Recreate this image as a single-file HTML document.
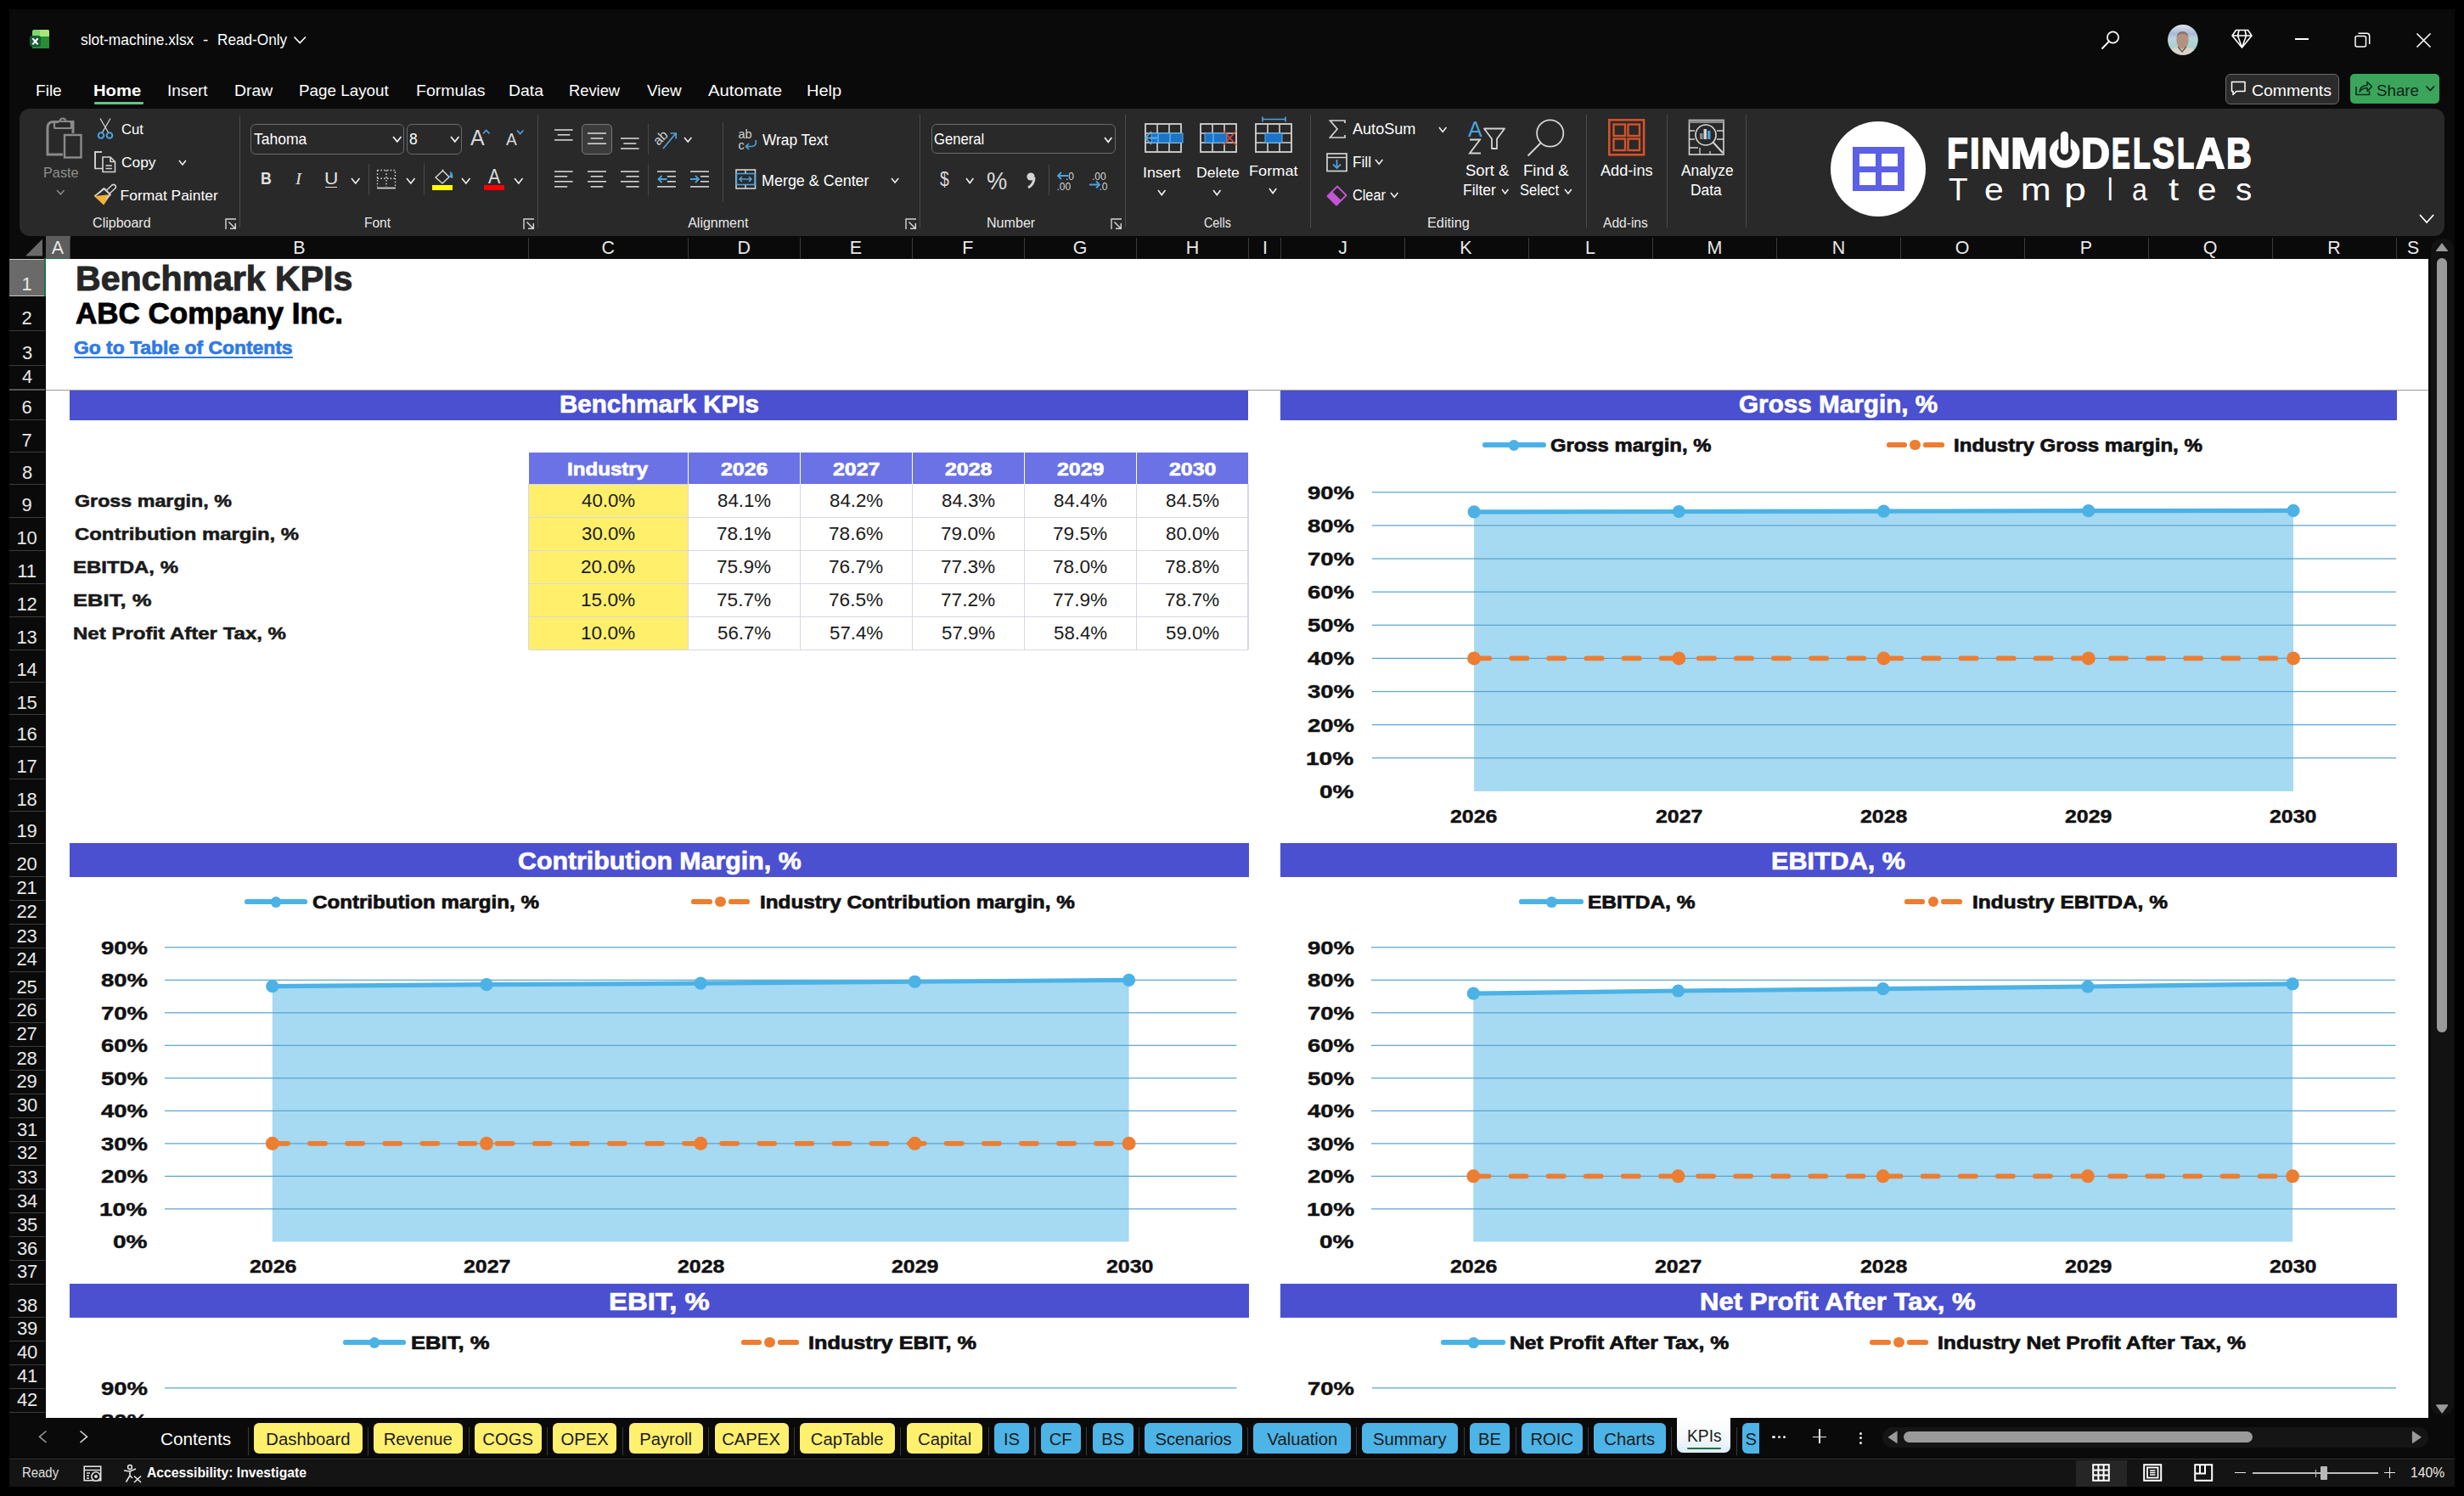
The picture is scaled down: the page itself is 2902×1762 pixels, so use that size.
<!DOCTYPE html><html><head><meta charset="utf-8"><style>*{margin:0;padding:0}html,body{width:2902px;height:1762px;overflow:hidden;background:#000}
.r,.t,.s{position:absolute}.t{white-space:nowrap;line-height:1;font-family:'Liberation Sans',sans-serif;transform-origin:left center}
svg{position:absolute;overflow:visible}</style></head><body><div style="position:relative;width:2902px;height:1762px;overflow:hidden"><div class="r" style="left:11.00px;top:11.00px;width:2880.00px;height:1740.00px;background:#0a0a0a;"></div>
<svg style="left:35px;top:34px;" width="24" height="25" viewBox="0 0 24 25">
<rect x="3" y="1" width="20" height="22" rx="2.5" fill="#1f7a3a"/>
<rect x="3" y="1" width="20" height="8" rx="2.5" fill="#7fd66a"/>
<rect x="3" y="5" width="20" height="4" fill="#7fd66a"/>
<rect x="12" y="1" width="11" height="8" rx="2" fill="#a8e67a"/>
<rect x="12" y="5" width="11" height="4" fill="#a8e67a"/>
<rect x="3" y="9" width="20" height="14" rx="0" fill="#258a3f"/>
<rect x="14" y="9" width="9" height="14" fill="#2a8c34"/>
<rect x="19" y="19" width="4" height="4" rx="2" fill="#2a8c34"/>
<rect x="0" y="8" width="13" height="13" rx="3" fill="#185c37"/>
<path d="M3.4 11.2 L9.6 18.4 M9.6 11.2 L3.4 18.4" stroke="#fff" stroke-width="2.1"/>
</svg>
<div class="t" style="left:95.20px;top:37.83px;font-size:18.857px;font-weight:normal;color:#ffffff;font-family:'Liberation Sans', sans-serif;transform:scaleX(0.9222);">slot-machine.xlsx</div>
<div class="t" style="left:239.00px;top:37.83px;font-size:18.857px;font-weight:normal;color:#ffffff;font-family:'Liberation Sans', sans-serif;">-</div>
<div class="t" style="left:255.79px;top:37.83px;font-size:18.857px;font-weight:normal;color:#ffffff;font-family:'Liberation Sans', sans-serif;transform:scaleX(0.9125);">Read-Only</div>
<svg style="left:345px;top:42px;" width="17" height="11" viewBox="0 0 17 11"><path d="M1.5 1.5 L8.2 8.5 L15 1.5" fill="none" stroke="#fff" stroke-width="1.6"/></svg>
<svg style="left:2474px;top:36px;" width="24" height="23" viewBox="0 0 24 23"><circle cx="14.5" cy="8" r="6.6" fill="none" stroke="#fff" stroke-width="1.7"/><path d="M10 12.6 L2 21" stroke="#fff" stroke-width="1.9" stroke-linecap="round"/></svg>
<svg style="left:2553px;top:29px;" width="36" height="36" viewBox="0 0 36 36"><defs><clipPath id="av"><circle cx="17.9" cy="17.9" r="17.9"/></clipPath>
<linearGradient id="avg" x1="0" y1="0" x2="0" y2="1"><stop offset="0" stop-color="#dfe4f0"/><stop offset="0.3" stop-color="#a9b9d6"/><stop offset="0.45" stop-color="#b9d4dc"/><stop offset="0.75" stop-color="#a9d2cf"/><stop offset="1" stop-color="#d8d4cc"/></linearGradient></defs>
<g clip-path="url(#av)"><rect width="36" height="36" fill="url(#avg)"/>
<ellipse cx="17.5" cy="18.5" rx="7.2" ry="10" fill="#b39282"/>
<path d="M10.5 15 Q11 8 17.5 8 Q24 8 24.5 15 Q22.5 10.5 17.5 10.5 Q12.5 10.5 10.5 15 Z" fill="#8a7268"/>
<path d="M2 36 Q4 27 11 26 L17 31 L23 26 Q31 27 34 36 Z" fill="#d9d2c8"/>
<path d="M12 26 L17 32 L22 26" fill="none" stroke="#6a5040" stroke-width="1.2"/></g></svg>
<svg style="left:2628px;top:34px;" width="26" height="24" viewBox="0 0 26 24"><path d="M5.5 1.5 H19.5 L24 8 L12.5 22 L1 8 Z M1 8 H24 M9 1.5 L7.5 8 L12.5 22 L17.5 8 L16 1.5" fill="none" stroke="#fff" stroke-width="1.6" stroke-linejoin="round"/></svg>
<div class="r" style="left:2703.00px;top:45.30px;width:15.60px;height:1.60px;background:#fff;"></div>
<svg style="left:2773px;top:37.6px;" width="19" height="19" viewBox="0 0 19 19"><rect x="1" y="4.5" width="12.5" height="12.5" rx="2" fill="none" stroke="#fff" stroke-width="1.5"/><path d="M4.5 1.3 H14.5 Q17.7 1.3 17.7 4.5 V14" fill="none" stroke="#fff" stroke-width="1.5"/></svg>
<svg style="left:2845px;top:37.6px;" width="19" height="19" viewBox="0 0 19 19"><path d="M1.5 1.5 L17.5 17.5 M17.5 1.5 L1.5 17.5" stroke="#fff" stroke-width="1.6"/></svg>
<div class="r" style="left:2621.00px;top:87.40px;width:134.20px;height:35.20px;box-sizing:border-box;border:1.3px solid #6a6a6a;background:#2b2b2b;border-radius:6px;"></div>
<svg style="left:2627px;top:95px;" width="20" height="20" viewBox="0 0 20 20"><path d="M1.5 1.5 H17 V12.5 H7 L3 16.5 V12.5 H1.5 Z" fill="none" stroke="#fff" stroke-width="1.5" stroke-linejoin="round"/></svg>
<div class="t" style="left:2652.30px;top:98.08px;font-size:18.571px;font-weight:normal;color:#fff;font-family:'Liberation Sans', sans-serif;transform:scaleX(1.0474);">Comments</div>
<div class="r" style="left:2768.00px;top:87.40px;width:104.70px;height:34.60px;background:#3ba55c;border-radius:5px;"></div>
<svg style="left:2773px;top:94px;" width="22" height="20" viewBox="0 0 22 20"><path d="M2 8 V17.5 H17.5 V13" fill="none" stroke="#10301a" stroke-width="1.6"/><path d="M6 14 Q7 6.5 15 6.5 V2.5 L20.5 8 L15 13.3 V9.5 Q9.5 9.5 6 14 Z" fill="none" stroke="#10301a" stroke-width="1.6" stroke-linejoin="round"/></svg>
<div class="t" style="left:2798.70px;top:98.08px;font-size:18.571px;font-weight:normal;color:#0f2416;font-family:'Liberation Sans', sans-serif;transform:scaleX(1.0100);">Share</div>
<svg style="left:2856px;top:100px;" width="13" height="9" viewBox="0 0 13 9"><path d="M1.5 1.5 L6.3 6.5 L11 1.5" fill="none" stroke="#0f2416" stroke-width="1.7"/></svg>
<div class="t" style="left:41.58px;top:97.56px;font-size:18.714px;font-weight:normal;color:#fff;font-family:'Liberation Sans', sans-serif;transform:scaleX(1.0197);">File</div>
<div class="t" style="left:110.22px;top:97.56px;font-size:18.714px;font-weight:bold;color:#fff;font-family:'Liberation Sans', sans-serif;transform:scaleX(1.0819);">Home</div>
<div class="t" style="left:197.28px;top:97.56px;font-size:18.714px;font-weight:normal;color:#fff;font-family:'Liberation Sans', sans-serif;transform:scaleX(1.0176);">Insert</div>
<div class="t" style="left:275.96px;top:97.56px;font-size:18.714px;font-weight:normal;color:#fff;font-family:'Liberation Sans', sans-serif;transform:scaleX(1.0362);">Draw</div>
<div class="t" style="left:351.99px;top:97.56px;font-size:18.714px;font-weight:normal;color:#fff;font-family:'Liberation Sans', sans-serif;transform:scaleX(1.0073);">Page Layout</div>
<div class="t" style="left:489.96px;top:97.56px;font-size:18.714px;font-weight:normal;color:#fff;font-family:'Liberation Sans', sans-serif;transform:scaleX(1.0445);">Formulas</div>
<div class="t" style="left:598.76px;top:97.56px;font-size:18.714px;font-weight:normal;color:#fff;font-family:'Liberation Sans', sans-serif;transform:scaleX(1.0382);">Data</div>
<div class="t" style="left:669.92px;top:97.56px;font-size:18.714px;font-weight:normal;color:#fff;font-family:'Liberation Sans', sans-serif;transform:scaleX(0.9800);">Review</div>
<div class="t" style="left:761.80px;top:97.56px;font-size:18.714px;font-weight:normal;color:#fff;font-family:'Liberation Sans', sans-serif;transform:scaleX(1.0075);">View</div>
<div class="t" style="left:834.00px;top:97.56px;font-size:18.714px;font-weight:normal;color:#fff;font-family:'Liberation Sans', sans-serif;transform:scaleX(1.0860);">Automate</div>
<div class="t" style="left:949.93px;top:97.56px;font-size:18.714px;font-weight:normal;color:#fff;font-family:'Liberation Sans', sans-serif;transform:scaleX(1.0711);">Help</div>
<div class="r" style="left:111.00px;top:120.00px;width:58.00px;height:2.60px;background:#68c08a;border-radius:1.3px;"></div>
<div class="r" style="left:23.00px;top:128.00px;width:2855.60px;height:149.70px;background:#292929;border-radius:12px;"></div>
<svg style="left:52px;top:140px;" width="46" height="48" viewBox="0 0 46 48">
<path d="M17 3.5 H11 Q4 3.5 4 10.5 V42 H22" fill="none" stroke="#8a8a8a" stroke-width="3"/>
<path d="M30 3.5 H34 V17" fill="none" stroke="#8a8a8a" stroke-width="3"/>
<rect x="12" y="3" width="20" height="8" rx="1.5" fill="none" stroke="#8a8a8a" stroke-width="2.2"/>
<path d="M18.5 3 Q18.5 -0.5 22 -0.5 Q25.5 -0.5 25.5 3" fill="none" stroke="#8a8a8a" stroke-width="2"/>
<rect x="24" y="19" width="19.5" height="26.5" fill="none" stroke="#8a8a8a" stroke-width="2.4"/>
</svg>
<div class="t" style="left:51.07px;top:194.95px;font-size:17.429px;font-weight:normal;color:#8f8f8f;font-family:'Liberation Sans', sans-serif;transform:scaleX(0.9339);">Paste</div>
<svg style="left:66px;top:223.4px;" width="10.700000000000003" height="6.799999999999983" viewBox="0 0 10.700000000000003 6.799999999999983"><path d="M1 1 L5.4 5.8 L9.7 1" fill="none" stroke="#8a8a8a" stroke-width="1.5"/></svg>
<svg style="left:114px;top:139px;" width="22" height="27" viewBox="0 0 22 27">
<path d="M4 0.5 L13.5 17 M16 0.5 L6.5 17" stroke="#d4d4d4" stroke-width="1.3" fill="none"/>
<circle cx="5" cy="20.5" r="3.3" fill="none" stroke="#4aa3df" stroke-width="2"/>
<circle cx="15" cy="20.5" r="3.3" fill="none" stroke="#4aa3df" stroke-width="2"/>
</svg>
<div class="t" style="left:142.60px;top:144.39px;font-size:17.143px;font-weight:normal;color:#ffffff;font-family:'Liberation Sans', sans-serif;transform:scaleX(0.9743);">Cut</div>
<svg style="left:111px;top:178px;" width="27" height="26" viewBox="0 0 27 26">
<path d="M8 2 V1 H1 V20.5 H10" fill="none" stroke="#d4d4d4" stroke-width="1.6"/>
<path d="M9 1 H1 V20.5" fill="none" stroke="#d4d4d4" stroke-width="1.6"/>
<path d="M10 7 H19 L24.5 12.5 V24.5 H10 Z M19 7 V12.5 H24.5" fill="none" stroke="#d4d4d4" stroke-width="1.6" stroke-linejoin="round"/>
<path d="M13.5 17 H21 M13.5 20.5 H21" stroke="#d4d4d4" stroke-width="1.4"/>
</svg>
<div class="t" style="left:142.60px;top:182.75px;font-size:17.429px;font-weight:normal;color:#ffffff;font-family:'Liberation Sans', sans-serif;transform:scaleX(0.9968);">Copy</div>
<svg style="left:210.4px;top:188px;" width="9.900000000000006" height="7" viewBox="0 0 9.900000000000006 7"><path d="M1 1 L5.0 6.0 L8.9 1" fill="none" stroke="#f0f0f0" stroke-width="1.6"/></svg>
<svg style="left:110px;top:217px;" width="28" height="26" viewBox="0 0 28 26">
<path d="M1.5 14 L13 5 L20 12 L12 24 Z" fill="#f2b13a" stroke="#f2b13a" stroke-width="1"/>
<path d="M1.5 14 L13 5 L20 12" fill="#2d2d2d" stroke="#d4d4d4" stroke-width="1.6" stroke-linejoin="round"/>
<path d="M7 10 L12 5 L20 12.5 L14.5 17.5" fill="none" stroke="#d4d4d4" stroke-width="1.5"/>
<path d="M14.5 8 L22 1 Q24 -0.5 25.8 1.3 Q27.3 3 25.5 5 L18 12" fill="none" stroke="#d4d4d4" stroke-width="1.6"/>
</svg>
<div class="t" style="left:141.60px;top:222.05px;font-size:17.429px;font-weight:normal;color:#ffffff;font-family:'Liberation Sans', sans-serif;">Format Painter</div>
<div class="t" style="left:109.10px;top:254.57px;font-size:16.000px;font-weight:normal;color:#e8e8e8;font-family:'Liberation Sans', sans-serif;">Clipboard</div>
<svg style="left:264.6px;top:256.5px;" width="14" height="14" viewBox="0 0 14 14"><path d="M1 13 V1 H13" fill="none" stroke="#d4d4d4" stroke-width="1.4"/><path d="M4.5 4.5 L12 12 M12.3 6 V12.3 H6" fill="none" stroke="#d4d4d4" stroke-width="1.5"/></svg>
<div class="r" style="left:282.10px;top:135.50px;width:1.20px;height:132.70px;background:#4a4a4a;"></div>
<div class="r" style="left:295.20px;top:146.00px;width:180.50px;height:35.80px;box-sizing:border-box;border:1.3px solid #6a6a6a;background:transparent;border-radius:6px;"></div>
<div class="t" style="left:298.60px;top:154.98px;font-size:18.571px;font-weight:normal;color:#ffffff;font-family:'Liberation Sans', sans-serif;transform:scaleX(0.9443);">Tahoma</div>
<svg style="left:461.5px;top:160.3px;" width="11.5" height="7.799999999999983" viewBox="0 0 11.5 7.799999999999983"><path d="M1 1 L5.8 6.8 L10.5 1" fill="none" stroke="#f0f0f0" stroke-width="1.7"/></svg>
<div class="r" style="left:479.30px;top:146.00px;width:64.30px;height:35.80px;box-sizing:border-box;border:1.3px solid #6a6a6a;background:transparent;border-radius:6px;"></div>
<div class="t" style="left:482.30px;top:154.98px;font-size:18.571px;font-weight:normal;color:#ffffff;font-family:'Liberation Sans', sans-serif;transform:scaleX(0.9400);">8</div>
<svg style="left:529.5px;top:160.3px;" width="11.5" height="7.799999999999983" viewBox="0 0 11.5 7.799999999999983"><path d="M1 1 L5.8 6.8 L10.5 1" fill="none" stroke="#f0f0f0" stroke-width="1.7"/></svg>
<div class="t" style="left:553.80px;top:148.98px;font-size:26.429px;font-weight:normal;color:#d8d8d8;font-family:'Liberation Sans', sans-serif;transform:scaleX(0.9444);">A</div>
<svg style="left:568px;top:152px;" width="10" height="7" viewBox="0 0 10 7"><path d="M1 5.5 L4.6 1.5 L8.5 5.5" fill="none" stroke="#4aa3df" stroke-width="1.7"/></svg>
<div class="t" style="left:595.50px;top:154.22px;font-size:20.286px;font-weight:normal;color:#d8d8d8;font-family:'Liberation Sans', sans-serif;transform:scaleX(0.9429);">A</div>
<svg style="left:607.5px;top:152px;" width="10" height="7" viewBox="0 0 10 7"><path d="M1 1.5 L4.6 5.5 L8.5 1.5" fill="none" stroke="#4aa3df" stroke-width="1.7"/></svg>
<div class="t" style="left:306.70px;top:200.80px;font-size:19.714px;font-weight:bold;color:#e0e0e0;font-family:'Liberation Sans', sans-serif;transform:scaleX(0.9000);">B</div>
<div class="t" style="left:348.07px;top:200.80px;font-size:19.714px;font-weight:normal;color:#e0e0e0;font-family:'Liberation Serif', serif;font-style:italic;transform:scaleX(1.0667);">I</div>
<div class="t" style="left:381.85px;top:200.80px;font-size:19.714px;font-weight:normal;color:#e0e0e0;font-family:'Liberation Sans', sans-serif;transform:scaleX(1.1500);">U</div>
<div class="r" style="left:383.00px;top:219.60px;width:13.80px;height:1.60px;background:#e0e0e0;"></div>
<svg style="left:413.3px;top:208.5px;" width="11.5" height="7.900000000000006" viewBox="0 0 11.5 7.900000000000006"><path d="M1 1 L5.8 6.9 L10.5 1" fill="none" stroke="#f0f0f0" stroke-width="1.6"/></svg>
<div class="r" style="left:433.80px;top:193.40px;width:1.20px;height:36.60px;background:#4a4a4a;"></div>
<svg style="left:443px;top:199px;" width="26" height="25" viewBox="0 0 26 25">
<path d="M1.5 1.5 H22.5 V21 M1.5 1.5 V21 M12 1.5 V21 M1.5 11.2 H22.5" fill="none" stroke="#d4d4d4" stroke-width="1.4" stroke-dasharray="1.6 2.2"/>
<path d="M1 22.5 H23" stroke="#d4d4d4" stroke-width="1.8"/>
</svg>
<svg style="left:478.3px;top:208.5px;" width="11.5" height="7.900000000000006" viewBox="0 0 11.5 7.900000000000006"><path d="M1 1 L5.8 6.9 L10.5 1" fill="none" stroke="#f0f0f0" stroke-width="1.6"/></svg>
<div class="r" style="left:498.80px;top:193.40px;width:1.20px;height:36.60px;background:#4a4a4a;"></div>
<svg style="left:510px;top:199px;" width="26" height="20" viewBox="0 0 26 20">
<path d="M3 10 L11.5 2 L19 9.5 L11 17 Z" fill="none" stroke="#d4d4d4" stroke-width="1.5" stroke-linejoin="round"/>
<path d="M11.5 2 V0.5" stroke="#d4d4d4" stroke-width="1.4"/>
<path d="M19 9.5 Q22 6.5 20.5 3.5 Q23.5 6 22.5 11" fill="#4aa3df" stroke="#4aa3df" stroke-width="1.2"/>
</svg>
<div class="r" style="left:508.60px;top:218.00px;width:24.40px;height:5.80px;background:#ffff00;"></div>
<svg style="left:543.3px;top:208.5px;" width="11.5" height="7.900000000000006" viewBox="0 0 11.5 7.900000000000006"><path d="M1 1 L5.8 6.9 L10.5 1" fill="none" stroke="#f0f0f0" stroke-width="1.6"/></svg>
<div class="t" style="left:575.00px;top:196.72px;font-size:23.571px;font-weight:normal;color:#d8d8d8;font-family:'Liberation Sans', sans-serif;transform:scaleX(0.9125);">A</div>
<div class="r" style="left:569.60px;top:218.00px;width:24.40px;height:5.80px;background:#ff0000;"></div>
<svg style="left:604.7px;top:208.5px;" width="11.5" height="7.900000000000006" viewBox="0 0 11.5 7.900000000000006"><path d="M1 1 L5.8 6.9 L10.5 1" fill="none" stroke="#f0f0f0" stroke-width="1.6"/></svg>
<div class="t" style="left:429.43px;top:254.57px;font-size:16.000px;font-weight:normal;color:#e8e8e8;font-family:'Liberation Sans', sans-serif;transform:scaleX(0.9693);">Font</div>
<svg style="left:616px;top:256.5px;" width="14" height="14" viewBox="0 0 14 14"><path d="M1 13 V1 H13" fill="none" stroke="#d4d4d4" stroke-width="1.4"/><path d="M4.5 4.5 L12 12 M12.3 6 V12.3 H6" fill="none" stroke="#d4d4d4" stroke-width="1.5"/></svg>
<div class="r" style="left:633.00px;top:135.00px;width:1.20px;height:133.00px;background:#4a4a4a;"></div>
<svg style="left:652.1px;top:150.9px;" width="40" height="15.900000000000006" viewBox="0 0 40 15.900000000000006"><path d="M1.0 2.0 H22.6" stroke="#d4d4d4" stroke-width="1.6"/><path d="M4.7 7.8 H19.3" stroke="#d4d4d4" stroke-width="1.6"/><path d="M1.0 13.9 H22.6" stroke="#d4d4d4" stroke-width="1.6"/></svg>
<div class="r" style="left:685.30px;top:146.30px;width:35.40px;height:35.30px;box-sizing:border-box;border:1.3px solid #7a7a7a;background:#3b3b3b;border-radius:5px;"></div>
<svg style="left:691px;top:154.9px;" width="40" height="16.19999999999999" viewBox="0 0 40 16.19999999999999"><path d="M1.0 2.0 H23.0" stroke="#d4d4d4" stroke-width="1.6"/><path d="M4.7 8.0 H19.3" stroke="#d4d4d4" stroke-width="1.6"/><path d="M1.0 14.2 H23.0" stroke="#d4d4d4" stroke-width="1.6"/></svg>
<svg style="left:730.3px;top:160.8px;" width="40" height="16.0" viewBox="0 0 40 16.0"><path d="M1.0 2.0 H22.6" stroke="#d4d4d4" stroke-width="1.6"/><path d="M4.3 8.0 H19.3" stroke="#d4d4d4" stroke-width="1.6"/><path d="M1.0 14.0 H22.6" stroke="#d4d4d4" stroke-width="1.6"/></svg>
<div class="r" style="left:763.10px;top:146.00px;width:1.20px;height:35.60px;background:#4a4a4a;"></div>
<svg style="left:772px;top:151px;" width="28" height="26" viewBox="0 0 28 26">
<text x="0" y="0" transform="translate(3.5 21) rotate(-45)" font-family="Liberation Sans" font-size="15.5" fill="#d4d4d4">ab</text>
<path d="M9 24 L24 6 M17.5 6 H24.2 V12.5" fill="none" stroke="#4aa3df" stroke-width="1.7"/>
</svg>
<svg style="left:805px;top:161px;" width="10.399999999999977" height="7" viewBox="0 0 10.399999999999977 7"><path d="M1 1 L5.2 6.0 L9.4 1" fill="none" stroke="#f0f0f0" stroke-width="1.6"/></svg>
<div class="r" style="left:851.00px;top:144.00px;width:1.20px;height:94.00px;background:#4a4a4a;"></div>
<svg style="left:869px;top:152px;" width="25" height="26" viewBox="0 0 25 26">
<text x="0.5" y="11" font-family="Liberation Sans" font-size="14.5" fill="#d4d4d4">ab</text>
<text x="0.5" y="23.5" font-family="Liberation Sans" font-size="14.5" fill="#d4d4d4">c</text>
<path d="M21 13 Q23 20 16 20.5 H10 M13 17 L9.5 20.5 L13 24" fill="none" stroke="#4aa3df" stroke-width="1.7"/>
</svg>
<div class="t" style="left:897.50px;top:155.62px;font-size:18.286px;font-weight:normal;color:#ffffff;font-family:'Liberation Sans', sans-serif;transform:scaleX(0.9474);">Wrap Text</div>
<svg style="left:652.1px;top:200.2px;" width="40" height="21.900000000000006" viewBox="0 0 40 21.900000000000006"><path d="M1.0 2.0 H22.6" stroke="#d4d4d4" stroke-width="1.6"/><path d="M1.0 7.8 H16.2" stroke="#d4d4d4" stroke-width="1.6"/><path d="M1.0 13.8 H22.6" stroke="#d4d4d4" stroke-width="1.6"/><path d="M1.0 19.9 H16.2" stroke="#d4d4d4" stroke-width="1.6"/></svg>
<svg style="left:691px;top:200.2px;" width="40" height="21.900000000000006" viewBox="0 0 40 21.900000000000006"><path d="M1.0 2.0 H23.0" stroke="#d4d4d4" stroke-width="1.6"/><path d="M4.7 7.8 H19.3" stroke="#d4d4d4" stroke-width="1.6"/><path d="M1.0 13.8 H23.0" stroke="#d4d4d4" stroke-width="1.6"/><path d="M4.7 19.9 H19.3" stroke="#d4d4d4" stroke-width="1.6"/></svg>
<svg style="left:730.3px;top:200.2px;" width="40" height="21.900000000000006" viewBox="0 0 40 21.900000000000006"><path d="M1.0 2.0 H22.6" stroke="#d4d4d4" stroke-width="1.6"/><path d="M7.4 7.8 H22.6" stroke="#d4d4d4" stroke-width="1.6"/><path d="M1.0 13.8 H22.6" stroke="#d4d4d4" stroke-width="1.6"/><path d="M7.4 19.9 H22.6" stroke="#d4d4d4" stroke-width="1.6"/></svg>
<div class="r" style="left:763.10px;top:194.30px;width:1.20px;height:35.70px;background:#4a4a4a;"></div>
<svg style="left:773.2px;top:200.2px;" width="40" height="21.900000000000006" viewBox="0 0 40 21.900000000000006"><path d="M1.0 2.0 H22.9" stroke="#d4d4d4" stroke-width="1.6"/><path d="M12.8 7.8 H22.9" stroke="#d4d4d4" stroke-width="1.6"/><path d="M12.8 13.8 H22.9" stroke="#d4d4d4" stroke-width="1.6"/><path d="M1.0 19.9 H22.9" stroke="#d4d4d4" stroke-width="1.6"/></svg>
<svg style="left:773px;top:205px;" width="14" height="12" viewBox="0 0 14 12"><path d="M12.5 6 H2.5 M6.5 2 L2.5 6 L6.5 10" fill="none" stroke="#4aa3df" stroke-width="1.8"/></svg>
<svg style="left:812px;top:200.2px;" width="40" height="21.900000000000006" viewBox="0 0 40 21.900000000000006"><path d="M1.0 2.0 H23.0" stroke="#d4d4d4" stroke-width="1.6"/><path d="M13.0 7.8 H23.0" stroke="#d4d4d4" stroke-width="1.6"/><path d="M13.0 13.8 H23.0" stroke="#d4d4d4" stroke-width="1.6"/><path d="M1.0 19.9 H23.0" stroke="#d4d4d4" stroke-width="1.6"/></svg>
<svg style="left:812px;top:205px;" width="14" height="12" viewBox="0 0 14 12"><path d="M1 6 H11 M7 2 L11 6 L7 10" fill="none" stroke="#4aa3df" stroke-width="1.8"/></svg>
<svg style="left:866px;top:199px;" width="25" height="25" viewBox="0 0 25 25">
<rect x="1" y="1" width="22.5" height="22" fill="none" stroke="#d4d4d4" stroke-width="1.6"/>
<rect x="1.5" y="5.5" width="21.5" height="13" fill="none" stroke="#4aa3df" stroke-width="1.6"/>
<path d="M12 1 V5 M12 19 V23" stroke="#d4d4d4" stroke-width="1.5"/>
<path d="M5 12 H19 M8 9 L5 12 L8 15 M16 9 L19 12 L16 15" fill="none" stroke="#4aa3df" stroke-width="1.6"/>
</svg>
<div class="t" style="left:896.52px;top:203.82px;font-size:18.286px;font-weight:normal;color:#ffffff;font-family:'Liberation Sans', sans-serif;transform:scaleX(0.9816);">Merge &amp; Center</div>
<svg style="left:1049px;top:209px;" width="10.200000000000045" height="7" viewBox="0 0 10.200000000000045 7"><path d="M1 1 L5.1 6.0 L9.2 1" fill="none" stroke="#f0f0f0" stroke-width="1.6"/></svg>
<div class="t" style="left:810.20px;top:254.57px;font-size:16.000px;font-weight:normal;color:#e8e8e8;font-family:'Liberation Sans', sans-serif;">Alignment</div>
<svg style="left:1065.5px;top:256.5px;" width="14" height="14" viewBox="0 0 14 14"><path d="M1 13 V1 H13" fill="none" stroke="#d4d4d4" stroke-width="1.4"/><path d="M4.5 4.5 L12 12 M12.3 6 V12.3 H6" fill="none" stroke="#d4d4d4" stroke-width="1.5"/></svg>
<div class="r" style="left:1082.90px;top:135.00px;width:1.20px;height:133.00px;background:#4a4a4a;"></div>
<div class="r" style="left:1096.60px;top:146.20px;width:217.10px;height:35.10px;box-sizing:border-box;border:1.3px solid #6a6a6a;background:transparent;border-radius:6px;"></div>
<div class="t" style="left:1099.60px;top:154.98px;font-size:18.571px;font-weight:normal;color:#ffffff;font-family:'Liberation Sans', sans-serif;transform:scaleX(0.8966);">General</div>
<svg style="left:1299.6px;top:160.7px;" width="10.400000000000091" height="7.400000000000006" viewBox="0 0 10.400000000000091 7.400000000000006"><path d="M1 1 L5.2 6.4 L9.4 1" fill="none" stroke="#f0f0f0" stroke-width="1.7"/></svg>
<div class="t" style="left:1107.40px;top:198.81px;font-size:24.286px;font-weight:normal;color:#d8d8d8;font-family:'Liberation Sans', sans-serif;transform:scaleX(0.8000);">$</div>
<svg style="left:1137.2px;top:208.7px;" width="10.399999999999864" height="7.600000000000023" viewBox="0 0 10.399999999999864 7.600000000000023"><path d="M1 1 L5.2 6.6 L9.4 1" fill="none" stroke="#f0f0f0" stroke-width="1.6"/></svg>
<div class="t" style="left:1162.47px;top:197.75px;font-size:29.286px;font-weight:normal;color:#d8d8d8;font-family:'Liberation Sans', sans-serif;transform:scaleX(0.9333);">%</div>
<svg style="left:1208px;top:202px;" width="14" height="22" viewBox="0 0 14 22"><circle cx="6" cy="6" r="4.6" fill="#d4d4d4"/><path d="M10 7 Q10 15 3 19" fill="none" stroke="#d4d4d4" stroke-width="3"/></svg>
<div class="r" style="left:1234.80px;top:193.80px;width:1.20px;height:36.40px;background:#4a4a4a;"></div>
<svg style="left:1243px;top:198px;" width="28" height="28" viewBox="0 0 28 28">
<path d="M15 9 H3 M7 5 L3 9 L7 13" fill="none" stroke="#4aa3df" stroke-width="1.8"/>
<text x="12" y="13.5" font-family="Liberation Sans" font-size="12" fill="#d4d4d4">.0</text>
<text x="1.5" y="25.5" font-family="Liberation Sans" font-size="12" fill="#d4d4d4">.00</text>
</svg>
<svg style="left:1281px;top:198px;" width="28" height="28" viewBox="0 0 28 28">
<text x="5" y="13.5" font-family="Liberation Sans" font-size="12" fill="#d4d4d4">.00</text>
<path d="M2 19.5 H14 M10 15.5 L14 19.5 L10 23.5" fill="none" stroke="#4aa3df" stroke-width="1.8"/>
<text x="13.5" y="25.5" font-family="Liberation Sans" font-size="12" fill="#d4d4d4">.0</text>
</svg>
<div class="t" style="left:1162.39px;top:254.57px;font-size:16.000px;font-weight:normal;color:#e8e8e8;font-family:'Liberation Sans', sans-serif;transform:scaleX(1.0057);">Number</div>
<svg style="left:1308px;top:256.5px;" width="14" height="14" viewBox="0 0 14 14"><path d="M1 13 V1 H13" fill="none" stroke="#d4d4d4" stroke-width="1.4"/><path d="M4.5 4.5 L12 12 M12.3 6 V12.3 H6" fill="none" stroke="#d4d4d4" stroke-width="1.5"/></svg>
<div class="r" style="left:1324.90px;top:135.00px;width:1.20px;height:133.00px;background:#4a4a4a;"></div>
<svg style="left:1347.5px;top:144.5px;" width="46" height="36" viewBox="0 0 46 36">
<rect x="1" y="1" width="42" height="33" fill="none" stroke="#d4d4d4" stroke-width="1.8"/>
<path d="M15 1 V34 M29 1 V34 M1 12 H43 M1 23 H43" stroke="#d4d4d4" stroke-width="1.6"/>
<rect x="8" y="12" width="37" height="11" fill="#1a74c8" stroke="#5ab0ea" stroke-width="1"/><path d="M16 12.5 V22.5 M30 12.5 V22.5" stroke="#5ab0ea" stroke-width="1.5"/><path d="M15 17.5 H1.5 M8 10 L1 17.5 L8 25" fill="none" stroke="#5ab0ea" stroke-width="1.8"/></svg>
<div class="t" style="left:1346.28px;top:194.85px;font-size:17.429px;font-weight:normal;color:#ffffff;font-family:'Liberation Sans', sans-serif;transform:scaleX(1.0235);">Insert</div>
<svg style="left:1363px;top:222.7px;" width="10.5" height="7.600000000000023" viewBox="0 0 10.5 7.600000000000023"><path d="M1 1 L5.2 6.6 L9.5 1" fill="none" stroke="#f0f0f0" stroke-width="1.6"/></svg>
<svg style="left:1412.5px;top:144.5px;" width="46" height="36" viewBox="0 0 46 36">
<rect x="1" y="1" width="42" height="33" fill="none" stroke="#d4d4d4" stroke-width="1.8"/>
<path d="M15 1 V34 M29 1 V34 M1 12 H43 M1 23 H43" stroke="#d4d4d4" stroke-width="1.6"/>
<rect x="6" y="12" width="26" height="11" fill="#1a74c8" stroke="#5ab0ea" stroke-width="1"/><path d="M16 12.5 V22.5" stroke="#5ab0ea" stroke-width="1.5"/><path d="M28 9 L43 26 M43 9 L28 26" stroke="#e0463c" stroke-width="1.8"/></svg>
<div class="t" style="left:1408.79px;top:194.85px;font-size:17.429px;font-weight:normal;color:#ffffff;font-family:'Liberation Sans', sans-serif;transform:scaleX(1.0116);">Delete</div>
<svg style="left:1427.8px;top:222.7px;" width="10.5" height="7.600000000000023" viewBox="0 0 10.5 7.600000000000023"><path d="M1 1 L5.2 6.6 L9.5 1" fill="none" stroke="#f0f0f0" stroke-width="1.6"/></svg>
<svg style="left:1478.2px;top:144.5px;" width="46" height="36" viewBox="0 0 46 36">
<rect x="1" y="1" width="42" height="33" fill="none" stroke="#d4d4d4" stroke-width="1.8"/>
<path d="M15 1 V34 M29 1 V34 M1 12 H43 M1 23 H43" stroke="#d4d4d4" stroke-width="1.6"/>
<rect x="12" y="12" width="20" height="11" fill="#1a74c8" stroke="#5ab0ea" stroke-width="1"/></svg>
<svg style="left:1485px;top:137px;" width="32" height="8" viewBox="0 0 32 8"><path d="M2 3.5 H29 M2 0.5 V6.5 M29 0.5 V6.5" stroke="#4aa3df" stroke-width="1.6"/></svg>
<div class="t" style="left:1471.26px;top:192.95px;font-size:17.429px;font-weight:normal;color:#ffffff;font-family:'Liberation Sans', sans-serif;transform:scaleX(1.0444);">Format</div>
<svg style="left:1493.7px;top:220.8px;" width="10.299999999999955" height="7.599999999999994" viewBox="0 0 10.299999999999955 7.599999999999994"><path d="M1 1 L5.1 6.6 L9.3 1" fill="none" stroke="#f0f0f0" stroke-width="1.6"/></svg>
<div class="t" style="left:1418.20px;top:254.57px;font-size:16.000px;font-weight:normal;color:#e8e8e8;font-family:'Liberation Sans', sans-serif;transform:scaleX(0.8942);">Cells</div>
<div class="r" style="left:1543.30px;top:135.00px;width:1.20px;height:133.00px;background:#4a4a4a;"></div>
<svg style="left:1565px;top:141px;" width="21" height="23" viewBox="0 0 21 23"><path d="M19 4 V1 H1.5 L10 11 L1.5 21 H19 V18" fill="none" stroke="#d4d4d4" stroke-width="1.7" stroke-linejoin="miter"/></svg>
<div class="t" style="left:1593.10px;top:143.93px;font-size:17.571px;font-weight:normal;color:#ffffff;font-family:'Liberation Sans', sans-serif;transform:scaleX(1.0292);">AutoSum</div>
<svg style="left:1693.9px;top:149px;" width="10.399999999999864" height="7.300000000000011" viewBox="0 0 10.399999999999864 7.300000000000011"><path d="M1 1 L5.2 6.3 L9.4 1" fill="none" stroke="#f0f0f0" stroke-width="1.6"/></svg>
<svg style="left:1562px;top:180px;" width="26" height="23" viewBox="0 0 26 23"><rect x="1" y="1" width="23" height="20.5" fill="none" stroke="#d4d4d4" stroke-width="1.7"/><path d="M1 5.5 H24" stroke="#d4d4d4" stroke-width="1.5"/><path d="M12.5 8 V18 M8 13.5 L12.5 18 L17 13.5" fill="none" stroke="#4aa3df" stroke-width="1.8"/></svg>
<div class="t" style="left:1592.52px;top:182.53px;font-size:17.571px;font-weight:normal;color:#ffffff;font-family:'Liberation Sans', sans-serif;transform:scaleX(0.9790);">Fill</div>
<svg style="left:1619px;top:187px;" width="10.400000000000091" height="7.300000000000011" viewBox="0 0 10.400000000000091 7.300000000000011"><path d="M1 1 L5.2 6.3 L9.4 1" fill="none" stroke="#f0f0f0" stroke-width="1.6"/></svg>
<svg style="left:1562px;top:218px;" width="25" height="24" viewBox="0 0 25 24"><path d="M1.5 13 L13 1.5 L23.5 12 L12 23.5 Z" fill="none" stroke="#c455d6" stroke-width="1.8" stroke-linejoin="round"/><path d="M1.5 13 L7 7.5 L17.5 18 L12 23.5 Z" fill="#c455d6"/></svg>
<div class="t" style="left:1593.00px;top:221.63px;font-size:17.571px;font-weight:normal;color:#ffffff;font-family:'Liberation Sans', sans-serif;transform:scaleX(0.9259);">Clear</div>
<svg style="left:1636.9px;top:226px;" width="10.399999999999864" height="7.300000000000011" viewBox="0 0 10.399999999999864 7.300000000000011"><path d="M1 1 L5.2 6.3 L9.4 1" fill="none" stroke="#f0f0f0" stroke-width="1.6"/></svg>
<svg style="left:1728px;top:141px;" width="46" height="42" viewBox="0 0 46 42">
<text x="1" y="19.5" font-family="Liberation Sans" font-size="25" fill="#4aa3df">A</text>
<path d="M3 23.5 H15 L3 39.5 H16" fill="none" stroke="#d4d4d4" stroke-width="1.9"/>
<path d="M20 10.5 H44 L35 22.5 V34 H29 V22.5 Z" fill="none" stroke="#d4d4d4" stroke-width="1.8" stroke-linejoin="round"/>
</svg>
<div class="t" style="left:1725.50px;top:193.03px;font-size:17.571px;font-weight:normal;color:#ffffff;font-family:'Liberation Sans', sans-serif;transform:scaleX(1.0532);">Sort &amp;</div>
<div class="t" style="left:1723.40px;top:216.33px;font-size:17.571px;font-weight:normal;color:#ffffff;font-family:'Liberation Sans', sans-serif;transform:scaleX(0.9953);">Filter</div>
<svg style="left:1767.7px;top:221.5px;" width="9.399999999999864" height="7.0" viewBox="0 0 9.399999999999864 7.0"><path d="M1 1 L4.7 6.0 L8.4 1" fill="none" stroke="#f0f0f0" stroke-width="1.6"/></svg>
<svg style="left:1797px;top:139px;" width="46" height="47" viewBox="0 0 46 47"><circle cx="28.7" cy="18" r="15.6" fill="none" stroke="#d4d4d4" stroke-width="1.8"/><path d="M17.5 29.5 L2.5 44.5" stroke="#d4d4d4" stroke-width="1.9"/></svg>
<div class="t" style="left:1793.94px;top:193.03px;font-size:17.571px;font-weight:normal;color:#ffffff;font-family:'Liberation Sans', sans-serif;transform:scaleX(1.0571);">Find &amp;</div>
<div class="t" style="left:1790.20px;top:216.33px;font-size:17.571px;font-weight:normal;color:#ffffff;font-family:'Liberation Sans', sans-serif;transform:scaleX(0.9421);">Select</div>
<svg style="left:1841.6px;top:221.5px;" width="9.800000000000182" height="7.0" viewBox="0 0 9.800000000000182 7.0"><path d="M1 1 L4.9 6.0 L8.8 1" fill="none" stroke="#f0f0f0" stroke-width="1.6"/></svg>
<div class="t" style="left:1681.18px;top:254.57px;font-size:16.000px;font-weight:normal;color:#e8e8e8;font-family:'Liberation Sans', sans-serif;transform:scaleX(1.0186);">Editing</div>
<div class="r" style="left:1868.00px;top:135.00px;width:1.20px;height:133.00px;background:#4a4a4a;"></div>
<svg style="left:1893px;top:139px;" width="46" height="46" viewBox="0 0 46 46">
<rect x="2.3" y="2.3" width="40.8" height="41" fill="none" stroke="#d4532a" stroke-width="2.6"/>
<rect x="7.5" y="7.5" width="13.5" height="13.5" fill="none" stroke="#d4532a" stroke-width="2.4"/>
<rect x="24.5" y="7.5" width="13.5" height="13.5" fill="none" stroke="#d4532a" stroke-width="2.4"/>
<rect x="7.5" y="24.5" width="13.5" height="13.5" fill="none" stroke="#d4532a" stroke-width="2.4"/>
<rect x="24.5" y="24.5" width="13.5" height="13.5" fill="none" stroke="#d4532a" stroke-width="2.4"/>
</svg>
<div class="t" style="left:1885.20px;top:193.03px;font-size:17.571px;font-weight:normal;color:#ffffff;font-family:'Liberation Sans', sans-serif;transform:scaleX(1.0340);">Add-ins</div>
<div class="t" style="left:1888.40px;top:254.57px;font-size:16.000px;font-weight:normal;color:#e8e8e8;font-family:'Liberation Sans', sans-serif;transform:scaleX(0.9733);">Add-ins</div>
<div class="r" style="left:1962.80px;top:135.00px;width:1.20px;height:133.00px;background:#4a4a4a;"></div>
<svg style="left:1988px;top:140px;" width="45" height="45" viewBox="0 0 45 45">
<rect x="1.5" y="1.5" width="40.5" height="40.5" fill="none" stroke="#d4d4d4" stroke-width="1.6"/>
<rect x="1.5" y="1.5" width="40.5" height="3.5" fill="#8a8a8a"/>
<path d="M1.5 14 H8 M1.5 24 H8 M1.5 34 H12 M34 14 H42 M34 24 H42 M14 34 V42 M26 38 V42" stroke="#d4d4d4" stroke-width="1.3"/>
<circle cx="21" cy="19" r="12" fill="#292929" stroke="#d4d4d4" stroke-width="1.7"/>
<path d="M29.5 27.5 L41 40" stroke="#d4d4d4" stroke-width="2"/>
<rect x="14" y="17" width="3.5" height="7" fill="#8a8a8a"/>
<rect x="18.5" y="12" width="3.5" height="12" fill="#d4d4d4"/>
<rect x="23" y="14" width="3.5" height="10" fill="#4aa3df"/>
</svg>
<div class="t" style="left:1980.20px;top:193.03px;font-size:17.571px;font-weight:normal;color:#ffffff;font-family:'Liberation Sans', sans-serif;transform:scaleX(0.9852);">Analyze</div>
<div class="t" style="left:1991.41px;top:216.33px;font-size:17.571px;font-weight:normal;color:#ffffff;font-family:'Liberation Sans', sans-serif;transform:scaleX(0.9882);">Data</div>
<div class="r" style="left:2056.30px;top:135.00px;width:1.20px;height:133.00px;background:#4a4a4a;"></div>
<div class="r" style="left:2156.40px;top:142.90px;width:111.80px;height:111.80px;background:#ffffff;border-radius:56px;"></div>
<div class="r" style="left:2182.00px;top:172.90px;width:61.00px;height:52.60px;background:#5b60e6;"></div>
<div class="r" style="left:2190.00px;top:181.00px;width:19.00px;height:14.80px;background:#ffffff;"></div>
<div class="r" style="left:2216.30px;top:181.00px;width:19.00px;height:14.80px;background:#ffffff;"></div>
<div class="r" style="left:2190.00px;top:203.00px;width:19.00px;height:14.80px;background:#ffffff;"></div>
<div class="r" style="left:2216.30px;top:203.00px;width:19.00px;height:14.80px;background:#ffffff;"></div>
<div class="t" style="left:2293.23px;top:155.89px;font-size:49.429px;font-weight:bold;color:#fff;font-family:'Liberation Sans', sans-serif;-webkit-text-stroke:1.8px #fff;transform:scaleX(0.8231);">F</div>
<div class="t" style="left:2319.55px;top:155.89px;font-size:49.429px;font-weight:bold;color:#fff;font-family:'Liberation Sans', sans-serif;-webkit-text-stroke:1.8px #fff;transform:scaleX(0.8500);">I</div>
<div class="t" style="left:2332.87px;top:155.89px;font-size:49.429px;font-weight:bold;color:#fff;font-family:'Liberation Sans', sans-serif;-webkit-text-stroke:1.8px #fff;transform:scaleX(0.9767);">N</div>
<div class="t" style="left:2368.40px;top:155.89px;font-size:49.429px;font-weight:bold;color:#fff;font-family:'Liberation Sans', sans-serif;-webkit-text-stroke:1.8px #fff;transform:scaleX(1.0657);">M</div>
<div class="t" style="left:2450.94px;top:155.89px;font-size:49.429px;font-weight:bold;color:#fff;font-family:'Liberation Sans', sans-serif;-webkit-text-stroke:1.8px #fff;transform:scaleX(0.9548);">D</div>
<div class="t" style="left:2486.82px;top:155.89px;font-size:49.429px;font-weight:bold;color:#fff;font-family:'Liberation Sans', sans-serif;-webkit-text-stroke:1.8px #fff;transform:scaleX(0.6586);">E</div>
<div class="t" style="left:2512.13px;top:155.89px;font-size:49.429px;font-weight:bold;color:#fff;font-family:'Liberation Sans', sans-serif;-webkit-text-stroke:1.8px #fff;transform:scaleX(0.6885);">L</div>
<div class="t" style="left:2534.81px;top:155.89px;font-size:49.429px;font-weight:bold;color:#fff;font-family:'Liberation Sans', sans-serif;-webkit-text-stroke:1.8px #fff;transform:scaleX(0.7903);">S</div>
<div class="t" style="left:2564.39px;top:155.89px;font-size:49.429px;font-weight:bold;color:#fff;font-family:'Liberation Sans', sans-serif;-webkit-text-stroke:1.8px #fff;transform:scaleX(0.6692);">L</div>
<div class="t" style="left:2586.44px;top:155.89px;font-size:49.429px;font-weight:bold;color:#fff;font-family:'Liberation Sans', sans-serif;-webkit-text-stroke:1.8px #fff;transform:scaleX(0.9588);">A</div>
<div class="t" style="left:2621.99px;top:155.89px;font-size:49.429px;font-weight:bold;color:#fff;font-family:'Liberation Sans', sans-serif;-webkit-text-stroke:1.8px #fff;transform:scaleX(0.8355);">B</div>
<svg style="left:2410px;top:150px;" width="44" height="52" viewBox="0 0 44 52"><circle cx="21.6" cy="30" r="13.4" fill="none" stroke="#fff" stroke-width="8.9"/>
<rect x="14.5" y="2" width="14.2" height="32" rx="7" fill="#292929"/>
<rect x="16.9" y="4.7" width="9.1" height="27.3" rx="4.55" fill="#fff"/></svg>
<div class="t" style="left:2295.20px;top:206.48px;font-size:36.286px;font-weight:normal;color:#fff;font-family:'Liberation Sans', sans-serif;transform:scaleX(1.0227);">T</div>
<div class="t" style="left:2336.57px;top:206.48px;font-size:36.286px;font-weight:normal;color:#fff;font-family:'Liberation Sans', sans-serif;transform:scaleX(1.1278);">e</div>
<div class="t" style="left:2379.84px;top:206.48px;font-size:36.286px;font-weight:normal;color:#fff;font-family:'Liberation Sans', sans-serif;transform:scaleX(1.1808);">m</div>
<div class="t" style="left:2431.12px;top:206.48px;font-size:36.286px;font-weight:normal;color:#fff;font-family:'Liberation Sans', sans-serif;transform:scaleX(1.2882);">p</div>
<div class="t" style="left:2482.20px;top:206.48px;font-size:36.286px;font-weight:normal;color:#fff;font-family:'Liberation Sans', sans-serif;transform:scaleX(0.8000);">l</div>
<div class="t" style="left:2511.11px;top:206.48px;font-size:36.286px;font-weight:normal;color:#fff;font-family:'Liberation Sans', sans-serif;transform:scaleX(0.8900);">a</div>
<div class="t" style="left:2553.90px;top:206.48px;font-size:36.286px;font-weight:normal;color:#fff;font-family:'Liberation Sans', sans-serif;transform:scaleX(1.2100);">t</div>
<div class="t" style="left:2588.48px;top:206.48px;font-size:36.286px;font-weight:normal;color:#fff;font-family:'Liberation Sans', sans-serif;transform:scaleX(1.1167);">e</div>
<div class="t" style="left:2633.24px;top:206.48px;font-size:36.286px;font-weight:normal;color:#fff;font-family:'Liberation Sans', sans-serif;transform:scaleX(1.0625);">s</div>
<svg style="left:2848.6px;top:251.5px;" width="18.200000000000273" height="11.0" viewBox="0 0 18.200000000000273 11.0"><path d="M1 1 L9.1 10.0 L17.2 1" fill="none" stroke="#ffffff" stroke-width="1.7"/></svg>
<div class="r" style="left:53.60px;top:278.00px;width:29.30px;height:27.00px;background:#5d5d5d;"></div>
<div class="r" style="left:53.60px;top:303.50px;width:29.30px;height:1.50px;background:#1e7145;"></div>
<div class="t" style="left:60.75px;top:281.74px;font-size:21.429px;font-weight:normal;color:#e8e8e8;font-family:'Liberation Sans', sans-serif;">A</div>
<div class="r" style="left:82.40px;top:280.00px;width:1.00px;height:25.00px;background:#3c3c3c;"></div>
<div class="t" style="left:345.15px;top:281.74px;font-size:21.429px;font-weight:normal;color:#e8e8e8;font-family:'Liberation Sans', sans-serif;">B</div>
<div class="r" style="left:621.90px;top:280.00px;width:1.00px;height:25.00px;background:#3c3c3c;"></div>
<div class="t" style="left:708.45px;top:281.74px;font-size:21.429px;font-weight:normal;color:#e8e8e8;font-family:'Liberation Sans', sans-serif;">C</div>
<div class="r" style="left:810.00px;top:280.00px;width:1.00px;height:25.00px;background:#3c3c3c;"></div>
<div class="t" style="left:868.55px;top:281.74px;font-size:21.429px;font-weight:normal;color:#e8e8e8;font-family:'Liberation Sans', sans-serif;">D</div>
<div class="r" style="left:942.10px;top:280.00px;width:1.00px;height:25.00px;background:#3c3c3c;"></div>
<div class="t" style="left:1000.85px;top:281.74px;font-size:21.429px;font-weight:normal;color:#e8e8e8;font-family:'Liberation Sans', sans-serif;">E</div>
<div class="r" style="left:1073.60px;top:280.00px;width:1.00px;height:25.00px;background:#3c3c3c;"></div>
<div class="t" style="left:1133.15px;top:281.74px;font-size:21.429px;font-weight:normal;color:#e8e8e8;font-family:'Liberation Sans', sans-serif;">F</div>
<div class="r" style="left:1205.70px;top:280.00px;width:1.00px;height:25.00px;background:#3c3c3c;"></div>
<div class="t" style="left:1263.75px;top:281.74px;font-size:21.429px;font-weight:normal;color:#e8e8e8;font-family:'Liberation Sans', sans-serif;">G</div>
<div class="r" style="left:1337.80px;top:280.00px;width:1.00px;height:25.00px;background:#3c3c3c;"></div>
<div class="t" style="left:1396.80px;top:281.74px;font-size:21.429px;font-weight:normal;color:#e8e8e8;font-family:'Liberation Sans', sans-serif;">H</div>
<div class="r" style="left:1469.80px;top:280.00px;width:1.00px;height:25.00px;background:#3c3c3c;"></div>
<div class="t" style="left:1486.90px;top:281.74px;font-size:21.429px;font-weight:normal;color:#e8e8e8;font-family:'Liberation Sans', sans-serif;">I</div>
<div class="r" style="left:1508.00px;top:280.00px;width:1.00px;height:25.00px;background:#3c3c3c;"></div>
<div class="t" style="left:1576.35px;top:281.74px;font-size:21.429px;font-weight:normal;color:#e8e8e8;font-family:'Liberation Sans', sans-serif;">J</div>
<div class="r" style="left:1653.70px;top:280.00px;width:1.00px;height:25.00px;background:#3c3c3c;"></div>
<div class="t" style="left:1719.25px;top:281.74px;font-size:21.429px;font-weight:normal;color:#e8e8e8;font-family:'Liberation Sans', sans-serif;">K</div>
<div class="r" style="left:1799.80px;top:280.00px;width:1.00px;height:25.00px;background:#3c3c3c;"></div>
<div class="t" style="left:1867.05px;top:281.74px;font-size:21.429px;font-weight:normal;color:#e8e8e8;font-family:'Liberation Sans', sans-serif;">L</div>
<div class="r" style="left:1946.30px;top:280.00px;width:1.00px;height:25.00px;background:#3c3c3c;"></div>
<div class="t" style="left:2010.55px;top:281.74px;font-size:21.429px;font-weight:normal;color:#e8e8e8;font-family:'Liberation Sans', sans-serif;">M</div>
<div class="r" style="left:2091.80px;top:280.00px;width:1.00px;height:25.00px;background:#3c3c3c;"></div>
<div class="t" style="left:2157.80px;top:281.74px;font-size:21.429px;font-weight:normal;color:#e8e8e8;font-family:'Liberation Sans', sans-serif;">N</div>
<div class="r" style="left:2237.80px;top:280.00px;width:1.00px;height:25.00px;background:#3c3c3c;"></div>
<div class="t" style="left:2302.80px;top:281.74px;font-size:21.429px;font-weight:normal;color:#e8e8e8;font-family:'Liberation Sans', sans-serif;">O</div>
<div class="r" style="left:2383.80px;top:280.00px;width:1.00px;height:25.00px;background:#3c3c3c;"></div>
<div class="t" style="left:2449.80px;top:281.74px;font-size:21.429px;font-weight:normal;color:#e8e8e8;font-family:'Liberation Sans', sans-serif;">P</div>
<div class="r" style="left:2529.80px;top:280.00px;width:1.00px;height:25.00px;background:#3c3c3c;"></div>
<div class="t" style="left:2594.80px;top:281.74px;font-size:21.429px;font-weight:normal;color:#e8e8e8;font-family:'Liberation Sans', sans-serif;">Q</div>
<div class="r" style="left:2675.80px;top:280.00px;width:1.00px;height:25.00px;background:#3c3c3c;"></div>
<div class="t" style="left:2741.30px;top:281.74px;font-size:21.429px;font-weight:normal;color:#e8e8e8;font-family:'Liberation Sans', sans-serif;">R</div>
<div class="r" style="left:2821.80px;top:280.00px;width:1.00px;height:25.00px;background:#3c3c3c;"></div>
<div class="t" style="left:2835.00px;top:281.74px;font-size:21.429px;font-weight:normal;color:#e8e8e8;font-family:'Liberation Sans', sans-serif;">S</div>
<div class="r" style="left:28.00px;top:280.00px;width:25.00px;height:25.00px;background:#0a0a0a;"></div>
<svg style="left:29px;top:281px;" width="22" height="22" viewBox="0 0 22 22"><path d="M21 0.5 V20.5 H1 Z" fill="#6a6a6a"/></svg>
<div class="r" style="left:11.20px;top:305.00px;width:41.40px;height:1365.00px;background:#0a0a0a;"></div>
<div class="r" style="left:11.20px;top:305.30px;width:41.40px;height:43.70px;background:#6a6a6a;"></div>
<div class="r" style="left:11.20px;top:305.30px;width:41.40px;height:1.20px;background:#c8c8c8;"></div>
<div class="r" style="left:11.20px;top:347.80px;width:41.40px;height:1.20px;background:#c8c8c8;"></div>
<div class="t" style="left:25.50px;top:324.06px;font-size:22.000px;font-weight:normal;color:#e8e8e8;font-family:'Liberation Sans', sans-serif;">1</div>
<div class="r" style="left:11.20px;top:388.50px;width:41.40px;height:1.00px;background:#3c3c3c;"></div>
<div class="t" style="left:25.50px;top:364.06px;font-size:22.000px;font-weight:normal;color:#e8e8e8;font-family:'Liberation Sans', sans-serif;">2</div>
<div class="r" style="left:11.20px;top:429.50px;width:41.40px;height:1.00px;background:#3c3c3c;"></div>
<div class="t" style="left:26.00px;top:405.06px;font-size:22.000px;font-weight:normal;color:#e8e8e8;font-family:'Liberation Sans', sans-serif;">3</div>
<div class="r" style="left:11.20px;top:457.80px;width:41.40px;height:1.00px;background:#3c3c3c;"></div>
<div class="t" style="left:26.00px;top:433.36px;font-size:22.000px;font-weight:normal;color:#e8e8e8;font-family:'Liberation Sans', sans-serif;">4</div>
<div class="r" style="left:11.20px;top:493.50px;width:41.40px;height:1.00px;background:#3c3c3c;"></div>
<div class="t" style="left:25.50px;top:469.06px;font-size:22.000px;font-weight:normal;color:#e8e8e8;font-family:'Liberation Sans', sans-serif;">6</div>
<div class="r" style="left:11.20px;top:532.10px;width:41.40px;height:1.00px;background:#3c3c3c;"></div>
<div class="t" style="left:25.50px;top:507.66px;font-size:22.000px;font-weight:normal;color:#e8e8e8;font-family:'Liberation Sans', sans-serif;">7</div>
<div class="r" style="left:11.20px;top:570.10px;width:41.40px;height:1.00px;background:#3c3c3c;"></div>
<div class="t" style="left:26.00px;top:545.66px;font-size:22.000px;font-weight:normal;color:#e8e8e8;font-family:'Liberation Sans', sans-serif;">8</div>
<div class="r" style="left:11.20px;top:608.90px;width:41.40px;height:1.00px;background:#3c3c3c;"></div>
<div class="t" style="left:25.50px;top:584.46px;font-size:22.000px;font-weight:normal;color:#e8e8e8;font-family:'Liberation Sans', sans-serif;">9</div>
<div class="r" style="left:11.20px;top:647.90px;width:41.40px;height:1.00px;background:#3c3c3c;"></div>
<div class="t" style="left:19.38px;top:623.46px;font-size:22.000px;font-weight:normal;color:#e8e8e8;font-family:'Liberation Sans', sans-serif;">10</div>
<div class="r" style="left:11.20px;top:686.60px;width:41.40px;height:1.00px;background:#3c3c3c;"></div>
<div class="t" style="left:20.20px;top:662.16px;font-size:22.000px;font-weight:normal;color:#e8e8e8;font-family:'Liberation Sans', sans-serif;">11</div>
<div class="r" style="left:11.20px;top:725.50px;width:41.40px;height:1.00px;background:#3c3c3c;"></div>
<div class="t" style="left:19.38px;top:701.06px;font-size:22.000px;font-weight:normal;color:#e8e8e8;font-family:'Liberation Sans', sans-serif;">12</div>
<div class="r" style="left:11.20px;top:764.60px;width:41.40px;height:1.00px;background:#3c3c3c;"></div>
<div class="t" style="left:19.38px;top:740.16px;font-size:22.000px;font-weight:normal;color:#e8e8e8;font-family:'Liberation Sans', sans-serif;">13</div>
<div class="r" style="left:11.20px;top:802.90px;width:41.40px;height:1.00px;background:#3c3c3c;"></div>
<div class="t" style="left:19.38px;top:778.46px;font-size:22.000px;font-weight:normal;color:#e8e8e8;font-family:'Liberation Sans', sans-serif;">14</div>
<div class="r" style="left:11.20px;top:841.00px;width:41.40px;height:1.00px;background:#3c3c3c;"></div>
<div class="t" style="left:19.38px;top:816.56px;font-size:22.000px;font-weight:normal;color:#e8e8e8;font-family:'Liberation Sans', sans-serif;">15</div>
<div class="r" style="left:11.20px;top:878.90px;width:41.40px;height:1.00px;background:#3c3c3c;"></div>
<div class="t" style="left:19.38px;top:854.46px;font-size:22.000px;font-weight:normal;color:#e8e8e8;font-family:'Liberation Sans', sans-serif;">16</div>
<div class="r" style="left:11.20px;top:916.90px;width:41.40px;height:1.00px;background:#3c3c3c;"></div>
<div class="t" style="left:19.38px;top:892.46px;font-size:22.000px;font-weight:normal;color:#e8e8e8;font-family:'Liberation Sans', sans-serif;">17</div>
<div class="r" style="left:11.20px;top:955.00px;width:41.40px;height:1.00px;background:#3c3c3c;"></div>
<div class="t" style="left:19.38px;top:930.56px;font-size:22.000px;font-weight:normal;color:#e8e8e8;font-family:'Liberation Sans', sans-serif;">18</div>
<div class="r" style="left:11.20px;top:992.80px;width:41.40px;height:1.00px;background:#3c3c3c;"></div>
<div class="t" style="left:19.38px;top:968.36px;font-size:22.000px;font-weight:normal;color:#e8e8e8;font-family:'Liberation Sans', sans-serif;">19</div>
<div class="r" style="left:11.20px;top:1031.90px;width:41.40px;height:1.00px;background:#3c3c3c;"></div>
<div class="t" style="left:19.38px;top:1007.46px;font-size:22.000px;font-weight:normal;color:#e8e8e8;font-family:'Liberation Sans', sans-serif;">20</div>
<div class="r" style="left:11.20px;top:1059.70px;width:41.40px;height:1.00px;background:#3c3c3c;"></div>
<div class="t" style="left:19.38px;top:1035.26px;font-size:22.000px;font-weight:normal;color:#e8e8e8;font-family:'Liberation Sans', sans-serif;">21</div>
<div class="r" style="left:11.20px;top:1087.90px;width:41.40px;height:1.00px;background:#3c3c3c;"></div>
<div class="t" style="left:19.38px;top:1063.46px;font-size:22.000px;font-weight:normal;color:#e8e8e8;font-family:'Liberation Sans', sans-serif;">22</div>
<div class="r" style="left:11.20px;top:1116.10px;width:41.40px;height:1.00px;background:#3c3c3c;"></div>
<div class="t" style="left:19.38px;top:1091.66px;font-size:22.000px;font-weight:normal;color:#e8e8e8;font-family:'Liberation Sans', sans-serif;">23</div>
<div class="r" style="left:11.20px;top:1143.90px;width:41.40px;height:1.00px;background:#3c3c3c;"></div>
<div class="t" style="left:19.38px;top:1119.46px;font-size:22.000px;font-weight:normal;color:#e8e8e8;font-family:'Liberation Sans', sans-serif;">24</div>
<div class="r" style="left:11.20px;top:1176.00px;width:41.40px;height:1.00px;background:#3c3c3c;"></div>
<div class="t" style="left:19.38px;top:1151.56px;font-size:22.000px;font-weight:normal;color:#e8e8e8;font-family:'Liberation Sans', sans-serif;">25</div>
<div class="r" style="left:11.20px;top:1203.80px;width:41.40px;height:1.00px;background:#3c3c3c;"></div>
<div class="t" style="left:19.38px;top:1179.36px;font-size:22.000px;font-weight:normal;color:#e8e8e8;font-family:'Liberation Sans', sans-serif;">26</div>
<div class="r" style="left:11.20px;top:1231.90px;width:41.40px;height:1.00px;background:#3c3c3c;"></div>
<div class="t" style="left:19.38px;top:1207.46px;font-size:22.000px;font-weight:normal;color:#e8e8e8;font-family:'Liberation Sans', sans-serif;">27</div>
<div class="r" style="left:11.20px;top:1260.10px;width:41.40px;height:1.00px;background:#3c3c3c;"></div>
<div class="t" style="left:19.38px;top:1235.66px;font-size:22.000px;font-weight:normal;color:#e8e8e8;font-family:'Liberation Sans', sans-serif;">28</div>
<div class="r" style="left:11.20px;top:1287.50px;width:41.40px;height:1.00px;background:#3c3c3c;"></div>
<div class="t" style="left:19.38px;top:1263.06px;font-size:22.000px;font-weight:normal;color:#e8e8e8;font-family:'Liberation Sans', sans-serif;">29</div>
<div class="r" style="left:11.20px;top:1315.50px;width:41.40px;height:1.00px;background:#3c3c3c;"></div>
<div class="t" style="left:19.88px;top:1291.06px;font-size:22.000px;font-weight:normal;color:#e8e8e8;font-family:'Liberation Sans', sans-serif;">30</div>
<div class="r" style="left:11.20px;top:1344.00px;width:41.40px;height:1.00px;background:#3c3c3c;"></div>
<div class="t" style="left:19.88px;top:1319.56px;font-size:22.000px;font-weight:normal;color:#e8e8e8;font-family:'Liberation Sans', sans-serif;">31</div>
<div class="r" style="left:11.20px;top:1371.90px;width:41.40px;height:1.00px;background:#3c3c3c;"></div>
<div class="t" style="left:19.88px;top:1347.46px;font-size:22.000px;font-weight:normal;color:#e8e8e8;font-family:'Liberation Sans', sans-serif;">32</div>
<div class="r" style="left:11.20px;top:1400.10px;width:41.40px;height:1.00px;background:#3c3c3c;"></div>
<div class="t" style="left:19.88px;top:1375.66px;font-size:22.000px;font-weight:normal;color:#e8e8e8;font-family:'Liberation Sans', sans-serif;">33</div>
<div class="r" style="left:11.20px;top:1428.30px;width:41.40px;height:1.00px;background:#3c3c3c;"></div>
<div class="t" style="left:19.88px;top:1403.86px;font-size:22.000px;font-weight:normal;color:#e8e8e8;font-family:'Liberation Sans', sans-serif;">34</div>
<div class="r" style="left:11.20px;top:1456.20px;width:41.40px;height:1.00px;background:#3c3c3c;"></div>
<div class="t" style="left:19.88px;top:1431.76px;font-size:22.000px;font-weight:normal;color:#e8e8e8;font-family:'Liberation Sans', sans-serif;">35</div>
<div class="r" style="left:11.20px;top:1484.20px;width:41.40px;height:1.00px;background:#3c3c3c;"></div>
<div class="t" style="left:19.88px;top:1459.76px;font-size:22.000px;font-weight:normal;color:#e8e8e8;font-family:'Liberation Sans', sans-serif;">36</div>
<div class="r" style="left:11.20px;top:1511.50px;width:41.40px;height:1.00px;background:#3c3c3c;"></div>
<div class="t" style="left:19.88px;top:1487.06px;font-size:22.000px;font-weight:normal;color:#e8e8e8;font-family:'Liberation Sans', sans-serif;">37</div>
<div class="r" style="left:11.20px;top:1551.00px;width:41.40px;height:1.00px;background:#3c3c3c;"></div>
<div class="t" style="left:19.88px;top:1526.56px;font-size:22.000px;font-weight:normal;color:#e8e8e8;font-family:'Liberation Sans', sans-serif;">38</div>
<div class="r" style="left:11.20px;top:1578.90px;width:41.40px;height:1.00px;background:#3c3c3c;"></div>
<div class="t" style="left:19.88px;top:1554.46px;font-size:22.000px;font-weight:normal;color:#e8e8e8;font-family:'Liberation Sans', sans-serif;">39</div>
<div class="r" style="left:11.20px;top:1606.80px;width:41.40px;height:1.00px;background:#3c3c3c;"></div>
<div class="t" style="left:19.88px;top:1582.36px;font-size:22.000px;font-weight:normal;color:#e8e8e8;font-family:'Liberation Sans', sans-serif;">40</div>
<div class="r" style="left:11.20px;top:1634.80px;width:41.40px;height:1.00px;background:#3c3c3c;"></div>
<div class="t" style="left:19.88px;top:1610.36px;font-size:22.000px;font-weight:normal;color:#e8e8e8;font-family:'Liberation Sans', sans-serif;">41</div>
<div class="r" style="left:11.20px;top:1662.70px;width:41.40px;height:1.00px;background:#3c3c3c;"></div>
<div class="t" style="left:19.88px;top:1638.26px;font-size:22.000px;font-weight:normal;color:#e8e8e8;font-family:'Liberation Sans', sans-serif;">42</div>
<div class="r" style="left:11.20px;top:1699.50px;width:41.40px;height:1.00px;background:#3c3c3c;"></div>
<div class="r" style="left:11.20px;top:458.30px;width:41.40px;height:2.10px;background:#555;"></div>
<div class="r" style="left:52.40px;top:304.00px;width:1.60px;height:45.00px;background:#1e7145;"></div>
<div class="r" style="left:53.60px;top:305.30px;width:2806.40px;height:1365.00px;background:#ffffff;"></div>
<div class="t" style="left:89.35px;top:307.82px;font-size:40.000px;font-weight:bold;color:#262626;font-family:'Liberation Sans', sans-serif;-webkit-text-stroke:1.0px #262626;transform:scaleX(1.0265);">Benchmark KPIs</div>
<div class="t" style="left:89.00px;top:352.30px;font-size:34.857px;font-weight:bold;color:#000000;font-family:'Liberation Sans', sans-serif;-webkit-text-stroke:0.9px #000000;transform:scaleX(1.0043);">ABC Company Inc.</div>
<div class="t" style="left:87.30px;top:398.96px;font-size:22.000px;font-weight:bold;color:#2f7ae5;font-family:'Liberation Sans', sans-serif;-webkit-text-stroke:0.7px #2f7ae5;transform:scaleX(1.0398);">Go to Table of Contents</div>
<div class="r" style="left:87.30px;top:420.20px;width:257.30px;height:1.80px;background:#2f7ae5;"></div>
<div class="r" style="left:53.60px;top:458.80px;width:2806.40px;height:1.20px;background:#9a9a9a;"></div>
<div class="r" style="left:82.20px;top:460.00px;width:1388.10px;height:34.60px;background:#4b50d0;"></div>
<div class="t" style="left:658.77px;top:462.24px;font-size:28.714px;font-weight:bold;color:#ffffff;font-family:'Liberation Sans', sans-serif;-webkit-text-stroke:0.7px #ffffff;transform:scaleX(1.0298);">Benchmark KPIs</div>
<div class="r" style="left:622.80px;top:533.10px;width:847.20px;height:36.80px;background:#6b72e6;"></div>
<div class="t" style="left:668.34px;top:540.73px;font-size:22.857px;font-weight:bold;color:#ffffff;font-family:'Liberation Sans', sans-serif;-webkit-text-stroke:0.7px #ffffff;transform:scaleX(1.0558);">Industry</div>
<div class="r" style="left:809.90px;top:533.10px;width:1.30px;height:36.80px;background:#ffffff;"></div>
<div class="t" style="left:849.00px;top:540.73px;font-size:22.857px;font-weight:bold;color:#ffffff;font-family:'Liberation Sans', sans-serif;-webkit-text-stroke:0.7px #ffffff;transform:scaleX(1.0915);">2026</div>
<div class="r" style="left:941.80px;top:533.10px;width:1.30px;height:36.80px;background:#ffffff;"></div>
<div class="t" style="left:980.90px;top:540.73px;font-size:22.857px;font-weight:bold;color:#ffffff;font-family:'Liberation Sans', sans-serif;-webkit-text-stroke:0.7px #ffffff;transform:scaleX(1.0915);">2027</div>
<div class="r" style="left:1073.70px;top:533.10px;width:1.30px;height:36.80px;background:#ffffff;"></div>
<div class="t" style="left:1112.85px;top:540.73px;font-size:22.857px;font-weight:bold;color:#ffffff;font-family:'Liberation Sans', sans-serif;-webkit-text-stroke:0.7px #ffffff;transform:scaleX(1.0915);">2028</div>
<div class="r" style="left:1205.70px;top:533.10px;width:1.30px;height:36.80px;background:#ffffff;"></div>
<div class="t" style="left:1244.85px;top:540.73px;font-size:22.857px;font-weight:bold;color:#ffffff;font-family:'Liberation Sans', sans-serif;-webkit-text-stroke:0.7px #ffffff;transform:scaleX(1.0915);">2029</div>
<div class="r" style="left:1337.70px;top:533.10px;width:1.30px;height:36.80px;background:#ffffff;"></div>
<div class="t" style="left:1376.75px;top:540.73px;font-size:22.857px;font-weight:bold;color:#ffffff;font-family:'Liberation Sans', sans-serif;-webkit-text-stroke:0.7px #ffffff;transform:scaleX(1.0915);">2030</div>
<div class="r" style="left:622.80px;top:570.20px;width:187.60px;height:195.10px;background:#ffef6b;"></div>
<div class="t" style="left:87.50px;top:580.13px;font-size:20.857px;font-weight:bold;color:#1a1a1a;font-family:'Liberation Sans', sans-serif;-webkit-text-stroke:0.55px #1a1a1a;transform:scaleX(1.1162);">Gross margin, %</div>
<div class="t" style="left:685.20px;top:579.10px;font-size:21.714px;font-weight:normal;color:#1a1a1a;font-family:'Liberation Sans', sans-serif;transform:scaleX(1.0255);">40.0%</div>
<div class="t" style="left:844.95px;top:579.10px;font-size:21.714px;font-weight:normal;color:#1a1a1a;font-family:'Liberation Sans', sans-serif;transform:scaleX(1.0255);">84.1%</div>
<div class="t" style="left:976.85px;top:579.10px;font-size:21.714px;font-weight:normal;color:#1a1a1a;font-family:'Liberation Sans', sans-serif;transform:scaleX(1.0255);">84.2%</div>
<div class="t" style="left:1108.80px;top:579.10px;font-size:21.714px;font-weight:normal;color:#1a1a1a;font-family:'Liberation Sans', sans-serif;transform:scaleX(1.0255);">84.3%</div>
<div class="t" style="left:1240.80px;top:579.10px;font-size:21.714px;font-weight:normal;color:#1a1a1a;font-family:'Liberation Sans', sans-serif;transform:scaleX(1.0255);">84.4%</div>
<div class="t" style="left:1372.70px;top:579.10px;font-size:21.714px;font-weight:normal;color:#1a1a1a;font-family:'Liberation Sans', sans-serif;transform:scaleX(1.0255);">84.5%</div>
<div class="r" style="left:622.80px;top:608.60px;width:847.20px;height:1.20px;background:#d6d6ea;"></div>
<div class="t" style="left:87.50px;top:619.33px;font-size:20.857px;font-weight:bold;color:#1a1a1a;font-family:'Liberation Sans', sans-serif;-webkit-text-stroke:0.55px #1a1a1a;transform:scaleX(1.1462);">Contribution margin, %</div>
<div class="t" style="left:685.20px;top:618.30px;font-size:21.714px;font-weight:normal;color:#1a1a1a;font-family:'Liberation Sans', sans-serif;transform:scaleX(1.0255);">30.0%</div>
<div class="t" style="left:843.91px;top:618.30px;font-size:21.714px;font-weight:normal;color:#1a1a1a;font-family:'Liberation Sans', sans-serif;transform:scaleX(1.0425);">78.1%</div>
<div class="t" style="left:975.81px;top:618.30px;font-size:21.714px;font-weight:normal;color:#1a1a1a;font-family:'Liberation Sans', sans-serif;transform:scaleX(1.0425);">78.6%</div>
<div class="t" style="left:1107.76px;top:618.30px;font-size:21.714px;font-weight:normal;color:#1a1a1a;font-family:'Liberation Sans', sans-serif;transform:scaleX(1.0425);">79.0%</div>
<div class="t" style="left:1239.76px;top:618.30px;font-size:21.714px;font-weight:normal;color:#1a1a1a;font-family:'Liberation Sans', sans-serif;transform:scaleX(1.0425);">79.5%</div>
<div class="t" style="left:1372.70px;top:618.30px;font-size:21.714px;font-weight:normal;color:#1a1a1a;font-family:'Liberation Sans', sans-serif;transform:scaleX(1.0255);">80.0%</div>
<div class="r" style="left:622.80px;top:647.80px;width:847.20px;height:1.20px;background:#d6d6ea;"></div>
<div class="t" style="left:86.35px;top:658.33px;font-size:20.857px;font-weight:bold;color:#1a1a1a;font-family:'Liberation Sans', sans-serif;-webkit-text-stroke:0.55px #1a1a1a;transform:scaleX(1.1510);">EBITDA, %</div>
<div class="t" style="left:684.16px;top:657.30px;font-size:21.714px;font-weight:normal;color:#1a1a1a;font-family:'Liberation Sans', sans-serif;transform:scaleX(1.0425);">20.0%</div>
<div class="t" style="left:843.91px;top:657.30px;font-size:21.714px;font-weight:normal;color:#1a1a1a;font-family:'Liberation Sans', sans-serif;transform:scaleX(1.0425);">75.9%</div>
<div class="t" style="left:975.81px;top:657.30px;font-size:21.714px;font-weight:normal;color:#1a1a1a;font-family:'Liberation Sans', sans-serif;transform:scaleX(1.0425);">76.7%</div>
<div class="t" style="left:1107.76px;top:657.30px;font-size:21.714px;font-weight:normal;color:#1a1a1a;font-family:'Liberation Sans', sans-serif;transform:scaleX(1.0425);">77.3%</div>
<div class="t" style="left:1239.76px;top:657.30px;font-size:21.714px;font-weight:normal;color:#1a1a1a;font-family:'Liberation Sans', sans-serif;transform:scaleX(1.0425);">78.0%</div>
<div class="t" style="left:1371.66px;top:657.30px;font-size:21.714px;font-weight:normal;color:#1a1a1a;font-family:'Liberation Sans', sans-serif;transform:scaleX(1.0425);">78.8%</div>
<div class="r" style="left:622.80px;top:686.80px;width:847.20px;height:1.20px;background:#d6d6ea;"></div>
<div class="t" style="left:86.27px;top:697.33px;font-size:20.857px;font-weight:bold;color:#1a1a1a;font-family:'Liberation Sans', sans-serif;-webkit-text-stroke:0.55px #1a1a1a;transform:scaleX(1.2271);">EBIT, %</div>
<div class="t" style="left:684.16px;top:696.30px;font-size:21.714px;font-weight:normal;color:#1a1a1a;font-family:'Liberation Sans', sans-serif;transform:scaleX(1.0425);">15.0%</div>
<div class="t" style="left:843.91px;top:696.30px;font-size:21.714px;font-weight:normal;color:#1a1a1a;font-family:'Liberation Sans', sans-serif;transform:scaleX(1.0425);">75.7%</div>
<div class="t" style="left:975.81px;top:696.30px;font-size:21.714px;font-weight:normal;color:#1a1a1a;font-family:'Liberation Sans', sans-serif;transform:scaleX(1.0425);">76.5%</div>
<div class="t" style="left:1107.76px;top:696.30px;font-size:21.714px;font-weight:normal;color:#1a1a1a;font-family:'Liberation Sans', sans-serif;transform:scaleX(1.0425);">77.2%</div>
<div class="t" style="left:1239.76px;top:696.30px;font-size:21.714px;font-weight:normal;color:#1a1a1a;font-family:'Liberation Sans', sans-serif;transform:scaleX(1.0425);">77.9%</div>
<div class="t" style="left:1371.66px;top:696.30px;font-size:21.714px;font-weight:normal;color:#1a1a1a;font-family:'Liberation Sans', sans-serif;transform:scaleX(1.0425);">78.7%</div>
<div class="r" style="left:622.80px;top:725.80px;width:847.20px;height:1.20px;background:#d6d6ea;"></div>
<div class="t" style="left:86.35px;top:736.23px;font-size:20.857px;font-weight:bold;color:#1a1a1a;font-family:'Liberation Sans', sans-serif;-webkit-text-stroke:0.55px #1a1a1a;transform:scaleX(1.1527);">Net Profit After Tax, %</div>
<div class="t" style="left:684.16px;top:735.20px;font-size:21.714px;font-weight:normal;color:#1a1a1a;font-family:'Liberation Sans', sans-serif;transform:scaleX(1.0425);">10.0%</div>
<div class="t" style="left:844.95px;top:735.20px;font-size:21.714px;font-weight:normal;color:#1a1a1a;font-family:'Liberation Sans', sans-serif;transform:scaleX(1.0255);">56.7%</div>
<div class="t" style="left:976.85px;top:735.20px;font-size:21.714px;font-weight:normal;color:#1a1a1a;font-family:'Liberation Sans', sans-serif;transform:scaleX(1.0255);">57.4%</div>
<div class="t" style="left:1108.80px;top:735.20px;font-size:21.714px;font-weight:normal;color:#1a1a1a;font-family:'Liberation Sans', sans-serif;transform:scaleX(1.0255);">57.9%</div>
<div class="t" style="left:1240.80px;top:735.20px;font-size:21.714px;font-weight:normal;color:#1a1a1a;font-family:'Liberation Sans', sans-serif;transform:scaleX(1.0255);">58.4%</div>
<div class="t" style="left:1372.70px;top:735.20px;font-size:21.714px;font-weight:normal;color:#1a1a1a;font-family:'Liberation Sans', sans-serif;transform:scaleX(1.0255);">59.0%</div>
<div class="r" style="left:622.80px;top:764.70px;width:847.20px;height:1.20px;background:#d6d6ea;"></div>
<div class="r" style="left:622.20px;top:570.20px;width:1.20px;height:195.10px;background:#d6d6ea;"></div>
<div class="r" style="left:809.80px;top:570.20px;width:1.20px;height:195.10px;background:#d6d6ea;"></div>
<div class="r" style="left:941.70px;top:570.20px;width:1.20px;height:195.10px;background:#d6d6ea;"></div>
<div class="r" style="left:1073.60px;top:570.20px;width:1.20px;height:195.10px;background:#d6d6ea;"></div>
<div class="r" style="left:1205.60px;top:570.20px;width:1.20px;height:195.10px;background:#d6d6ea;"></div>
<div class="r" style="left:1337.60px;top:570.20px;width:1.20px;height:195.10px;background:#d6d6ea;"></div>
<div class="r" style="left:1469.40px;top:570.20px;width:1.20px;height:195.10px;background:#d6d6ea;"></div>
<div class="r" style="left:622.80px;top:570.20px;width:187.60px;height:0.10px;background:#d6d6ea;"></div>
<div class="r" style="left:1507.80px;top:460.00px;width:1315.50px;height:34.60px;background:#4b50d0;"></div>
<div class="t" style="left:2048.22px;top:462.24px;font-size:28.714px;font-weight:bold;color:#ffffff;font-family:'Liberation Sans', sans-serif;-webkit-text-stroke:0.7px #ffffff;transform:scaleX(1.0339);">Gross Margin, %</div>
<div class="r" style="left:1745.50px;top:521.40px;width:75.00px;height:5.60px;background:#4bb2e6;border-radius:2.8px;"></div>
<div class="r" style="left:1776.60px;top:517.80px;width:12.80px;height:12.80px;background:#4bb2e6;border-radius:6.4px;"></div>
<div class="t" style="left:1826.00px;top:513.70px;font-size:21.714px;font-weight:bold;color:#111;font-family:'Liberation Sans', sans-serif;-webkit-text-stroke:0.7px #111;transform:scaleX(1.0977);">Gross margin, %</div>
<div class="r" style="left:2221.60px;top:521.40px;width:24.52px;height:5.60px;background:#ed7d31;border-radius:2.8px;"></div>
<div class="r" style="left:2265.18px;top:521.40px;width:24.52px;height:5.60px;background:#ed7d31;border-radius:2.8px;"></div>
<div class="r" style="left:2249.35px;top:517.90px;width:12.60px;height:12.60px;background:#ed7d31;border-radius:6.3px;"></div>
<div class="t" style="left:2301.29px;top:513.70px;font-size:21.714px;font-weight:bold;color:#111;font-family:'Liberation Sans', sans-serif;-webkit-text-stroke:0.7px #111;transform:scaleX(1.1088);">Industry Gross margin, %</div>
<svg style="left:1615.60px;top:494.60px;overflow:hidden" width="1226" height="497" viewBox="0 0 1226 497"><polygon points="120.10,436.88 120.10,107.88 361.33,107.49 602.56,107.10 843.79,106.71 1085.02,106.32 1085.02,436.88" fill="#a6d9f2"/><rect x="0" y="397.16" width="1206.10" height="1.2" fill="#58a2cc"/><rect x="0" y="358.04" width="1206.10" height="1.2" fill="#58a2cc"/><rect x="0" y="318.92" width="1206.10" height="1.2" fill="#58a2cc"/><rect x="0" y="279.80" width="1206.10" height="1.2" fill="#58a2cc"/><rect x="0" y="240.68" width="1206.10" height="1.2" fill="#58a2cc"/><rect x="0" y="201.56" width="1206.10" height="1.2" fill="#58a2cc"/><rect x="0" y="162.44" width="1206.10" height="1.2" fill="#58a2cc"/><rect x="0" y="123.32" width="1206.10" height="1.2" fill="#58a2cc"/><rect x="0" y="84.20" width="1206.10" height="1.2" fill="#58a2cc"/><polyline points="120.10,107.88 361.33,107.49 602.56,107.10 843.79,106.71 1085.02,106.32" fill="none" stroke="#4bb2e6" stroke-width="5.2" stroke-linejoin="round" stroke-linecap="round"/><circle cx="120.10" cy="107.88" r="7.6" fill="#4bb2e6"/><circle cx="361.33" cy="107.49" r="7.6" fill="#4bb2e6"/><circle cx="602.56" cy="107.10" r="7.6" fill="#4bb2e6"/><circle cx="843.79" cy="106.71" r="7.6" fill="#4bb2e6"/><circle cx="1085.02" cy="106.32" r="7.6" fill="#4bb2e6"/><path d="M120.10 280.40 H1085.02" stroke="#ed7d31" stroke-width="5.6" stroke-dasharray="18.3 25.8" stroke-linecap="round"/><circle cx="120.10" cy="280.40" r="8" fill="#ed7d31"/><circle cx="361.33" cy="280.40" r="8" fill="#ed7d31"/><circle cx="602.56" cy="280.40" r="8" fill="#ed7d31"/><circle cx="843.79" cy="280.40" r="8" fill="#ed7d31"/><circle cx="1085.02" cy="280.40" r="8" fill="#ed7d31"/></svg>
<div class="t" style="left:1553.90px;top:921.74px;font-size:22.000px;font-weight:bold;color:#111;font-family:'Liberation Sans', sans-serif;-webkit-text-stroke:0.45px #111;transform:scaleX(1.2742);">0%</div>
<div class="t" style="left:1538.22px;top:882.62px;font-size:22.000px;font-weight:bold;color:#111;font-family:'Liberation Sans', sans-serif;-webkit-text-stroke:0.45px #111;transform:scaleX(1.2762);">10%</div>
<div class="t" style="left:1539.50px;top:843.50px;font-size:22.000px;font-weight:bold;color:#111;font-family:'Liberation Sans', sans-serif;-webkit-text-stroke:0.45px #111;transform:scaleX(1.2468);">20%</div>
<div class="t" style="left:1539.50px;top:804.38px;font-size:22.000px;font-weight:bold;color:#111;font-family:'Liberation Sans', sans-serif;-webkit-text-stroke:0.45px #111;transform:scaleX(1.2468);">30%</div>
<div class="t" style="left:1539.50px;top:765.26px;font-size:22.000px;font-weight:bold;color:#111;font-family:'Liberation Sans', sans-serif;-webkit-text-stroke:0.45px #111;transform:scaleX(1.2468);">40%</div>
<div class="t" style="left:1539.50px;top:726.14px;font-size:22.000px;font-weight:bold;color:#111;font-family:'Liberation Sans', sans-serif;-webkit-text-stroke:0.45px #111;transform:scaleX(1.2468);">50%</div>
<div class="t" style="left:1539.50px;top:687.02px;font-size:22.000px;font-weight:bold;color:#111;font-family:'Liberation Sans', sans-serif;-webkit-text-stroke:0.45px #111;transform:scaleX(1.2468);">60%</div>
<div class="t" style="left:1539.50px;top:647.90px;font-size:22.000px;font-weight:bold;color:#111;font-family:'Liberation Sans', sans-serif;-webkit-text-stroke:0.45px #111;transform:scaleX(1.2468);">70%</div>
<div class="t" style="left:1539.50px;top:608.78px;font-size:22.000px;font-weight:bold;color:#111;font-family:'Liberation Sans', sans-serif;-webkit-text-stroke:0.45px #111;transform:scaleX(1.2468);">80%</div>
<div class="t" style="left:1539.50px;top:569.66px;font-size:22.000px;font-weight:bold;color:#111;font-family:'Liberation Sans', sans-serif;-webkit-text-stroke:0.45px #111;transform:scaleX(1.2468);">90%</div>
<div class="t" style="left:1708.30px;top:949.73px;font-size:22.714px;font-weight:bold;color:#111;font-family:'Liberation Sans', sans-serif;-webkit-text-stroke:0.45px #111;transform:scaleX(1.0987);">2026</div>
<div class="t" style="left:1949.53px;top:949.73px;font-size:22.714px;font-weight:bold;color:#111;font-family:'Liberation Sans', sans-serif;-webkit-text-stroke:0.45px #111;transform:scaleX(1.0987);">2027</div>
<div class="t" style="left:2190.76px;top:949.73px;font-size:22.714px;font-weight:bold;color:#111;font-family:'Liberation Sans', sans-serif;-webkit-text-stroke:0.45px #111;transform:scaleX(1.0987);">2028</div>
<div class="t" style="left:2431.99px;top:949.73px;font-size:22.714px;font-weight:bold;color:#111;font-family:'Liberation Sans', sans-serif;-webkit-text-stroke:0.45px #111;transform:scaleX(1.0987);">2029</div>
<div class="t" style="left:2673.22px;top:949.73px;font-size:22.714px;font-weight:bold;color:#111;font-family:'Liberation Sans', sans-serif;-webkit-text-stroke:0.45px #111;transform:scaleX(1.0987);">2030</div>
<div class="r" style="left:82.20px;top:993.00px;width:1389.10px;height:39.60px;background:#4b50d0;"></div>
<div class="t" style="left:609.69px;top:1000.24px;font-size:28.714px;font-weight:bold;color:#ffffff;font-family:'Liberation Sans', sans-serif;-webkit-text-stroke:0.7px #ffffff;transform:scaleX(1.0568);">Contribution Margin, %</div>
<div class="r" style="left:288.00px;top:1059.40px;width:74.00px;height:5.60px;background:#4bb2e6;border-radius:2.8px;"></div>
<div class="r" style="left:318.60px;top:1055.80px;width:12.80px;height:12.80px;background:#4bb2e6;border-radius:6.4px;"></div>
<div class="t" style="left:368.00px;top:1051.70px;font-size:21.714px;font-weight:bold;color:#111;font-family:'Liberation Sans', sans-serif;-webkit-text-stroke:0.7px #111;transform:scaleX(1.1122);">Contribution margin, %</div>
<div class="r" style="left:814.00px;top:1059.40px;width:24.84px;height:5.60px;background:#ed7d31;border-radius:2.8px;"></div>
<div class="r" style="left:858.16px;top:1059.40px;width:24.84px;height:5.60px;background:#ed7d31;border-radius:2.8px;"></div>
<div class="r" style="left:842.20px;top:1055.90px;width:12.60px;height:12.60px;background:#ed7d31;border-radius:6.3px;"></div>
<div class="t" style="left:894.58px;top:1051.70px;font-size:21.714px;font-weight:bold;color:#111;font-family:'Liberation Sans', sans-serif;-webkit-text-stroke:0.7px #111;transform:scaleX(1.1182);">Industry Contribution margin, %</div>
<svg style="left:194.40px;top:1032.60px;overflow:hidden" width="1282" height="489" viewBox="0 0 1282 489"><polygon points="126.80,429.39 126.80,128.63 379.00,126.70 631.20,125.16 883.40,123.24 1135.60,121.31 1135.60,429.39" fill="#a6d9f2"/><rect x="0" y="390.28" width="1262.40" height="1.2" fill="#58a2cc"/><rect x="0" y="351.77" width="1262.40" height="1.2" fill="#58a2cc"/><rect x="0" y="313.26" width="1262.40" height="1.2" fill="#58a2cc"/><rect x="0" y="274.75" width="1262.40" height="1.2" fill="#58a2cc"/><rect x="0" y="236.24" width="1262.40" height="1.2" fill="#58a2cc"/><rect x="0" y="197.73" width="1262.40" height="1.2" fill="#58a2cc"/><rect x="0" y="159.22" width="1262.40" height="1.2" fill="#58a2cc"/><rect x="0" y="120.71" width="1262.40" height="1.2" fill="#58a2cc"/><rect x="0" y="82.20" width="1262.40" height="1.2" fill="#58a2cc"/><polyline points="126.80,128.63 379.00,126.70 631.20,125.16 883.40,123.24 1135.60,121.31" fill="none" stroke="#4bb2e6" stroke-width="5.2" stroke-linejoin="round" stroke-linecap="round"/><circle cx="126.80" cy="128.63" r="7.6" fill="#4bb2e6"/><circle cx="379.00" cy="126.70" r="7.6" fill="#4bb2e6"/><circle cx="631.20" cy="125.16" r="7.6" fill="#4bb2e6"/><circle cx="883.40" cy="123.24" r="7.6" fill="#4bb2e6"/><circle cx="1135.60" cy="121.31" r="7.6" fill="#4bb2e6"/><path d="M126.80 313.86 H1135.60" stroke="#ed7d31" stroke-width="5.6" stroke-dasharray="18.3 25.8" stroke-linecap="round"/><circle cx="126.80" cy="313.86" r="8" fill="#ed7d31"/><circle cx="379.00" cy="313.86" r="8" fill="#ed7d31"/><circle cx="631.20" cy="313.86" r="8" fill="#ed7d31"/><circle cx="883.40" cy="313.86" r="8" fill="#ed7d31"/><circle cx="1135.60" cy="313.86" r="8" fill="#ed7d31"/></svg>
<div class="t" style="left:133.00px;top:1452.25px;font-size:22.000px;font-weight:bold;color:#111;font-family:'Liberation Sans', sans-serif;-webkit-text-stroke:0.45px #111;transform:scaleX(1.2742);">0%</div>
<div class="t" style="left:117.32px;top:1413.74px;font-size:22.000px;font-weight:bold;color:#111;font-family:'Liberation Sans', sans-serif;-webkit-text-stroke:0.45px #111;transform:scaleX(1.2762);">10%</div>
<div class="t" style="left:118.60px;top:1375.23px;font-size:22.000px;font-weight:bold;color:#111;font-family:'Liberation Sans', sans-serif;-webkit-text-stroke:0.45px #111;transform:scaleX(1.2468);">20%</div>
<div class="t" style="left:118.60px;top:1336.72px;font-size:22.000px;font-weight:bold;color:#111;font-family:'Liberation Sans', sans-serif;-webkit-text-stroke:0.45px #111;transform:scaleX(1.2468);">30%</div>
<div class="t" style="left:118.60px;top:1298.21px;font-size:22.000px;font-weight:bold;color:#111;font-family:'Liberation Sans', sans-serif;-webkit-text-stroke:0.45px #111;transform:scaleX(1.2468);">40%</div>
<div class="t" style="left:118.60px;top:1259.70px;font-size:22.000px;font-weight:bold;color:#111;font-family:'Liberation Sans', sans-serif;-webkit-text-stroke:0.45px #111;transform:scaleX(1.2468);">50%</div>
<div class="t" style="left:118.60px;top:1221.19px;font-size:22.000px;font-weight:bold;color:#111;font-family:'Liberation Sans', sans-serif;-webkit-text-stroke:0.45px #111;transform:scaleX(1.2468);">60%</div>
<div class="t" style="left:118.60px;top:1182.68px;font-size:22.000px;font-weight:bold;color:#111;font-family:'Liberation Sans', sans-serif;-webkit-text-stroke:0.45px #111;transform:scaleX(1.2468);">70%</div>
<div class="t" style="left:118.60px;top:1144.17px;font-size:22.000px;font-weight:bold;color:#111;font-family:'Liberation Sans', sans-serif;-webkit-text-stroke:0.45px #111;transform:scaleX(1.2468);">80%</div>
<div class="t" style="left:118.60px;top:1105.66px;font-size:22.000px;font-weight:bold;color:#111;font-family:'Liberation Sans', sans-serif;-webkit-text-stroke:0.45px #111;transform:scaleX(1.2468);">90%</div>
<div class="t" style="left:293.80px;top:1480.24px;font-size:22.714px;font-weight:bold;color:#111;font-family:'Liberation Sans', sans-serif;-webkit-text-stroke:0.45px #111;transform:scaleX(1.0987);">2026</div>
<div class="t" style="left:546.00px;top:1480.24px;font-size:22.714px;font-weight:bold;color:#111;font-family:'Liberation Sans', sans-serif;-webkit-text-stroke:0.45px #111;transform:scaleX(1.0987);">2027</div>
<div class="t" style="left:798.20px;top:1480.24px;font-size:22.714px;font-weight:bold;color:#111;font-family:'Liberation Sans', sans-serif;-webkit-text-stroke:0.45px #111;transform:scaleX(1.0987);">2028</div>
<div class="t" style="left:1050.40px;top:1480.24px;font-size:22.714px;font-weight:bold;color:#111;font-family:'Liberation Sans', sans-serif;-webkit-text-stroke:0.45px #111;transform:scaleX(1.0987);">2029</div>
<div class="t" style="left:1302.60px;top:1480.24px;font-size:22.714px;font-weight:bold;color:#111;font-family:'Liberation Sans', sans-serif;-webkit-text-stroke:0.45px #111;transform:scaleX(1.0987);">2030</div>
<div class="r" style="left:1507.80px;top:993.00px;width:1315.50px;height:39.60px;background:#4b50d0;"></div>
<div class="t" style="left:2086.34px;top:1000.24px;font-size:28.714px;font-weight:bold;color:#ffffff;font-family:'Liberation Sans', sans-serif;-webkit-text-stroke:0.7px #ffffff;transform:scaleX(1.0648);">EBITDA, %</div>
<div class="r" style="left:1789.40px;top:1059.40px;width:75.60px;height:5.60px;background:#4bb2e6;border-radius:2.8px;"></div>
<div class="r" style="left:1820.80px;top:1055.80px;width:12.80px;height:12.80px;background:#4bb2e6;border-radius:6.4px;"></div>
<div class="t" style="left:1869.57px;top:1051.70px;font-size:21.714px;font-weight:bold;color:#111;font-family:'Liberation Sans', sans-serif;-webkit-text-stroke:0.7px #111;transform:scaleX(1.1277);">EBITDA, %</div>
<div class="r" style="left:2242.80px;top:1059.40px;width:24.55px;height:5.60px;background:#ed7d31;border-radius:2.8px;"></div>
<div class="r" style="left:2286.45px;top:1059.40px;width:24.55px;height:5.60px;background:#ed7d31;border-radius:2.8px;"></div>
<div class="r" style="left:2270.60px;top:1055.90px;width:12.60px;height:12.60px;background:#ed7d31;border-radius:6.3px;"></div>
<div class="t" style="left:2322.87px;top:1051.70px;font-size:21.714px;font-weight:bold;color:#111;font-family:'Liberation Sans', sans-serif;-webkit-text-stroke:0.7px #111;transform:scaleX(1.1285);">Industry EBITDA, %</div>
<svg style="left:1615.30px;top:1032.60px;overflow:hidden" width="1226" height="489" viewBox="0 0 1226 489"><polygon points="120.30,429.39 120.30,137.10 361.50,134.02 602.70,131.71 843.90,129.01 1085.10,125.93 1085.10,429.39" fill="#a6d9f2"/><rect x="0" y="390.28" width="1206.20" height="1.2" fill="#58a2cc"/><rect x="0" y="351.77" width="1206.20" height="1.2" fill="#58a2cc"/><rect x="0" y="313.26" width="1206.20" height="1.2" fill="#58a2cc"/><rect x="0" y="274.75" width="1206.20" height="1.2" fill="#58a2cc"/><rect x="0" y="236.24" width="1206.20" height="1.2" fill="#58a2cc"/><rect x="0" y="197.73" width="1206.20" height="1.2" fill="#58a2cc"/><rect x="0" y="159.22" width="1206.20" height="1.2" fill="#58a2cc"/><rect x="0" y="120.71" width="1206.20" height="1.2" fill="#58a2cc"/><rect x="0" y="82.20" width="1206.20" height="1.2" fill="#58a2cc"/><polyline points="120.30,137.10 361.50,134.02 602.70,131.71 843.90,129.01 1085.10,125.93" fill="none" stroke="#4bb2e6" stroke-width="5.2" stroke-linejoin="round" stroke-linecap="round"/><circle cx="120.30" cy="137.10" r="7.6" fill="#4bb2e6"/><circle cx="361.50" cy="134.02" r="7.6" fill="#4bb2e6"/><circle cx="602.70" cy="131.71" r="7.6" fill="#4bb2e6"/><circle cx="843.90" cy="129.01" r="7.6" fill="#4bb2e6"/><circle cx="1085.10" cy="125.93" r="7.6" fill="#4bb2e6"/><path d="M120.30 352.37 H1085.10" stroke="#ed7d31" stroke-width="5.6" stroke-dasharray="18.3 25.8" stroke-linecap="round"/><circle cx="120.30" cy="352.37" r="8" fill="#ed7d31"/><circle cx="361.50" cy="352.37" r="8" fill="#ed7d31"/><circle cx="602.70" cy="352.37" r="8" fill="#ed7d31"/><circle cx="843.90" cy="352.37" r="8" fill="#ed7d31"/><circle cx="1085.10" cy="352.37" r="8" fill="#ed7d31"/></svg>
<div class="t" style="left:1554.20px;top:1452.25px;font-size:22.000px;font-weight:bold;color:#111;font-family:'Liberation Sans', sans-serif;-webkit-text-stroke:0.45px #111;transform:scaleX(1.2742);">0%</div>
<div class="t" style="left:1538.52px;top:1413.74px;font-size:22.000px;font-weight:bold;color:#111;font-family:'Liberation Sans', sans-serif;-webkit-text-stroke:0.45px #111;transform:scaleX(1.2762);">10%</div>
<div class="t" style="left:1539.80px;top:1375.23px;font-size:22.000px;font-weight:bold;color:#111;font-family:'Liberation Sans', sans-serif;-webkit-text-stroke:0.45px #111;transform:scaleX(1.2468);">20%</div>
<div class="t" style="left:1539.80px;top:1336.72px;font-size:22.000px;font-weight:bold;color:#111;font-family:'Liberation Sans', sans-serif;-webkit-text-stroke:0.45px #111;transform:scaleX(1.2468);">30%</div>
<div class="t" style="left:1539.80px;top:1298.21px;font-size:22.000px;font-weight:bold;color:#111;font-family:'Liberation Sans', sans-serif;-webkit-text-stroke:0.45px #111;transform:scaleX(1.2468);">40%</div>
<div class="t" style="left:1539.80px;top:1259.70px;font-size:22.000px;font-weight:bold;color:#111;font-family:'Liberation Sans', sans-serif;-webkit-text-stroke:0.45px #111;transform:scaleX(1.2468);">50%</div>
<div class="t" style="left:1539.80px;top:1221.19px;font-size:22.000px;font-weight:bold;color:#111;font-family:'Liberation Sans', sans-serif;-webkit-text-stroke:0.45px #111;transform:scaleX(1.2468);">60%</div>
<div class="t" style="left:1539.80px;top:1182.68px;font-size:22.000px;font-weight:bold;color:#111;font-family:'Liberation Sans', sans-serif;-webkit-text-stroke:0.45px #111;transform:scaleX(1.2468);">70%</div>
<div class="t" style="left:1539.80px;top:1144.17px;font-size:22.000px;font-weight:bold;color:#111;font-family:'Liberation Sans', sans-serif;-webkit-text-stroke:0.45px #111;transform:scaleX(1.2468);">80%</div>
<div class="t" style="left:1539.80px;top:1105.66px;font-size:22.000px;font-weight:bold;color:#111;font-family:'Liberation Sans', sans-serif;-webkit-text-stroke:0.45px #111;transform:scaleX(1.2468);">90%</div>
<div class="t" style="left:1708.20px;top:1480.24px;font-size:22.714px;font-weight:bold;color:#111;font-family:'Liberation Sans', sans-serif;-webkit-text-stroke:0.45px #111;transform:scaleX(1.0987);">2026</div>
<div class="t" style="left:1949.40px;top:1480.24px;font-size:22.714px;font-weight:bold;color:#111;font-family:'Liberation Sans', sans-serif;-webkit-text-stroke:0.45px #111;transform:scaleX(1.0987);">2027</div>
<div class="t" style="left:2190.60px;top:1480.24px;font-size:22.714px;font-weight:bold;color:#111;font-family:'Liberation Sans', sans-serif;-webkit-text-stroke:0.45px #111;transform:scaleX(1.0987);">2028</div>
<div class="t" style="left:2431.80px;top:1480.24px;font-size:22.714px;font-weight:bold;color:#111;font-family:'Liberation Sans', sans-serif;-webkit-text-stroke:0.45px #111;transform:scaleX(1.0987);">2029</div>
<div class="t" style="left:2673.00px;top:1480.24px;font-size:22.714px;font-weight:bold;color:#111;font-family:'Liberation Sans', sans-serif;-webkit-text-stroke:0.45px #111;transform:scaleX(1.0987);">2030</div>
<div class="r" style="left:82.20px;top:1512.00px;width:1389.10px;height:39.60px;background:#4b50d0;"></div>
<div class="t" style="left:717.16px;top:1519.24px;font-size:28.714px;font-weight:bold;color:#ffffff;font-family:'Liberation Sans', sans-serif;-webkit-text-stroke:0.7px #ffffff;transform:scaleX(1.1444);">EBIT, %</div>
<div class="r" style="left:403.70px;top:1578.40px;width:74.50px;height:5.60px;background:#4bb2e6;border-radius:2.8px;"></div>
<div class="r" style="left:434.55px;top:1574.80px;width:12.80px;height:12.80px;background:#4bb2e6;border-radius:6.4px;"></div>
<div class="t" style="left:483.52px;top:1570.70px;font-size:21.714px;font-weight:bold;color:#111;font-family:'Liberation Sans', sans-serif;-webkit-text-stroke:0.7px #111;transform:scaleX(1.1791);">EBIT, %</div>
<div class="r" style="left:872.60px;top:1578.40px;width:24.52px;height:5.60px;background:#ed7d31;border-radius:2.8px;"></div>
<div class="r" style="left:916.18px;top:1578.40px;width:24.52px;height:5.60px;background:#ed7d31;border-radius:2.8px;"></div>
<div class="r" style="left:900.35px;top:1574.90px;width:12.60px;height:12.60px;background:#ed7d31;border-radius:6.3px;"></div>
<div class="t" style="left:951.84px;top:1570.70px;font-size:21.714px;font-weight:bold;color:#111;font-family:'Liberation Sans', sans-serif;-webkit-text-stroke:0.7px #111;transform:scaleX(1.1640);">Industry EBIT, %</div>
<svg style="left:194.40px;top:1551.60px;overflow:hidden" width="1282" height="119" viewBox="0 0 1282 119"><polygon points="126.80,429.39 126.80,137.87 379.00,134.79 631.20,132.09 883.40,129.40 1135.60,126.32 1135.60,429.39" fill="#a6d9f2"/><rect x="0" y="390.28" width="1262.40" height="1.2" fill="#58a2cc"/><rect x="0" y="351.77" width="1262.40" height="1.2" fill="#58a2cc"/><rect x="0" y="313.26" width="1262.40" height="1.2" fill="#58a2cc"/><rect x="0" y="274.75" width="1262.40" height="1.2" fill="#58a2cc"/><rect x="0" y="236.24" width="1262.40" height="1.2" fill="#58a2cc"/><rect x="0" y="197.73" width="1262.40" height="1.2" fill="#58a2cc"/><rect x="0" y="159.22" width="1262.40" height="1.2" fill="#58a2cc"/><rect x="0" y="120.71" width="1262.40" height="1.2" fill="#58a2cc"/><rect x="0" y="82.20" width="1262.40" height="1.2" fill="#58a2cc"/><polyline points="126.80,137.87 379.00,134.79 631.20,132.09 883.40,129.40 1135.60,126.32" fill="none" stroke="#4bb2e6" stroke-width="5.2" stroke-linejoin="round" stroke-linecap="round"/><circle cx="126.80" cy="137.87" r="7.6" fill="#4bb2e6"/><circle cx="379.00" cy="134.79" r="7.6" fill="#4bb2e6"/><circle cx="631.20" cy="132.09" r="7.6" fill="#4bb2e6"/><circle cx="883.40" cy="129.40" r="7.6" fill="#4bb2e6"/><circle cx="1135.60" cy="126.32" r="7.6" fill="#4bb2e6"/><path d="M126.80 371.62 H1135.60" stroke="#ed7d31" stroke-width="5.6" stroke-dasharray="18.3 25.8" stroke-linecap="round"/><circle cx="126.80" cy="371.62" r="8" fill="#ed7d31"/><circle cx="379.00" cy="371.62" r="8" fill="#ed7d31"/><circle cx="631.20" cy="371.62" r="8" fill="#ed7d31"/><circle cx="883.40" cy="371.62" r="8" fill="#ed7d31"/><circle cx="1135.60" cy="371.62" r="8" fill="#ed7d31"/></svg>
<div class="t" style="left:118.60px;top:1663.17px;font-size:22.000px;font-weight:bold;color:#111;font-family:'Liberation Sans', sans-serif;-webkit-text-stroke:0.45px #111;transform:scaleX(1.2468);">80%</div>
<div class="t" style="left:118.60px;top:1624.66px;font-size:22.000px;font-weight:bold;color:#111;font-family:'Liberation Sans', sans-serif;-webkit-text-stroke:0.45px #111;transform:scaleX(1.2468);">90%</div>
<div class="t" style="left:293.80px;top:1999.24px;font-size:22.714px;font-weight:bold;color:#111;font-family:'Liberation Sans', sans-serif;-webkit-text-stroke:0.45px #111;transform:scaleX(1.0987);">2026</div>
<div class="t" style="left:546.00px;top:1999.24px;font-size:22.714px;font-weight:bold;color:#111;font-family:'Liberation Sans', sans-serif;-webkit-text-stroke:0.45px #111;transform:scaleX(1.0987);">2027</div>
<div class="t" style="left:798.20px;top:1999.24px;font-size:22.714px;font-weight:bold;color:#111;font-family:'Liberation Sans', sans-serif;-webkit-text-stroke:0.45px #111;transform:scaleX(1.0987);">2028</div>
<div class="t" style="left:1050.40px;top:1999.24px;font-size:22.714px;font-weight:bold;color:#111;font-family:'Liberation Sans', sans-serif;-webkit-text-stroke:0.45px #111;transform:scaleX(1.0987);">2029</div>
<div class="t" style="left:1302.60px;top:1999.24px;font-size:22.714px;font-weight:bold;color:#111;font-family:'Liberation Sans', sans-serif;-webkit-text-stroke:0.45px #111;transform:scaleX(1.0987);">2030</div>
<div class="r" style="left:1507.80px;top:1512.00px;width:1315.50px;height:39.60px;background:#4b50d0;"></div>
<div class="t" style="left:2002.42px;top:1519.24px;font-size:28.714px;font-weight:bold;color:#ffffff;font-family:'Liberation Sans', sans-serif;-webkit-text-stroke:0.7px #ffffff;transform:scaleX(1.0826);">Net Profit After Tax, %</div>
<div class="r" style="left:1697.20px;top:1578.40px;width:75.90px;height:5.60px;background:#4bb2e6;border-radius:2.8px;"></div>
<div class="r" style="left:1728.75px;top:1574.80px;width:12.80px;height:12.80px;background:#4bb2e6;border-radius:6.4px;"></div>
<div class="t" style="left:1778.06px;top:1570.70px;font-size:21.714px;font-weight:bold;color:#111;font-family:'Liberation Sans', sans-serif;-webkit-text-stroke:0.7px #111;transform:scaleX(1.1396);">Net Profit After Tax, %</div>
<div class="r" style="left:2202.20px;top:1578.40px;width:24.73px;height:5.60px;background:#ed7d31;border-radius:2.8px;"></div>
<div class="r" style="left:2246.17px;top:1578.40px;width:24.73px;height:5.60px;background:#ed7d31;border-radius:2.8px;"></div>
<div class="r" style="left:2230.25px;top:1574.90px;width:12.60px;height:12.60px;background:#ed7d31;border-radius:6.3px;"></div>
<div class="t" style="left:2281.86px;top:1570.70px;font-size:21.714px;font-weight:bold;color:#111;font-family:'Liberation Sans', sans-serif;-webkit-text-stroke:0.7px #111;transform:scaleX(1.1401);">Industry Net Profit After Tax, %</div>
<svg style="left:1615.50px;top:1551.60px;overflow:hidden" width="1226" height="119" viewBox="0 0 1226 119"><polygon points="120.10,429.37 120.10,148.65 361.30,145.18 602.50,142.71 843.70,140.23 1084.90,137.26 1084.90,429.37" fill="#a6d9f2"/><rect x="0" y="379.26" width="1206.00" height="1.2" fill="#58a2cc"/><rect x="0" y="329.75" width="1206.00" height="1.2" fill="#58a2cc"/><rect x="0" y="280.24" width="1206.00" height="1.2" fill="#58a2cc"/><rect x="0" y="230.73" width="1206.00" height="1.2" fill="#58a2cc"/><rect x="0" y="181.22" width="1206.00" height="1.2" fill="#58a2cc"/><rect x="0" y="131.71" width="1206.00" height="1.2" fill="#58a2cc"/><rect x="0" y="82.20" width="1206.00" height="1.2" fill="#58a2cc"/><polyline points="120.10,148.65 361.30,145.18 602.50,142.71 843.70,140.23 1084.90,137.26" fill="none" stroke="#4bb2e6" stroke-width="5.2" stroke-linejoin="round" stroke-linecap="round"/><circle cx="120.10" cy="148.65" r="7.6" fill="#4bb2e6"/><circle cx="361.30" cy="145.18" r="7.6" fill="#4bb2e6"/><circle cx="602.50" cy="142.71" r="7.6" fill="#4bb2e6"/><circle cx="843.70" cy="140.23" r="7.6" fill="#4bb2e6"/><circle cx="1084.90" cy="137.26" r="7.6" fill="#4bb2e6"/><path d="M120.10 379.86 H1084.90" stroke="#ed7d31" stroke-width="5.6" stroke-dasharray="18.3 25.8" stroke-linecap="round"/><circle cx="120.10" cy="379.86" r="8" fill="#ed7d31"/><circle cx="361.30" cy="379.86" r="8" fill="#ed7d31"/><circle cx="602.50" cy="379.86" r="8" fill="#ed7d31"/><circle cx="843.70" cy="379.86" r="8" fill="#ed7d31"/><circle cx="1084.90" cy="379.86" r="8" fill="#ed7d31"/></svg>
<div class="t" style="left:1539.50px;top:1624.66px;font-size:22.000px;font-weight:bold;color:#111;font-family:'Liberation Sans', sans-serif;-webkit-text-stroke:0.45px #111;transform:scaleX(1.2468);">70%</div>
<div class="t" style="left:1708.20px;top:1999.22px;font-size:22.714px;font-weight:bold;color:#111;font-family:'Liberation Sans', sans-serif;-webkit-text-stroke:0.45px #111;transform:scaleX(1.0987);">2026</div>
<div class="t" style="left:1949.40px;top:1999.22px;font-size:22.714px;font-weight:bold;color:#111;font-family:'Liberation Sans', sans-serif;-webkit-text-stroke:0.45px #111;transform:scaleX(1.0987);">2027</div>
<div class="t" style="left:2190.60px;top:1999.22px;font-size:22.714px;font-weight:bold;color:#111;font-family:'Liberation Sans', sans-serif;-webkit-text-stroke:0.45px #111;transform:scaleX(1.0987);">2028</div>
<div class="t" style="left:2431.80px;top:1999.22px;font-size:22.714px;font-weight:bold;color:#111;font-family:'Liberation Sans', sans-serif;-webkit-text-stroke:0.45px #111;transform:scaleX(1.0987);">2029</div>
<div class="t" style="left:2673.00px;top:1999.22px;font-size:22.714px;font-weight:bold;color:#111;font-family:'Liberation Sans', sans-serif;-webkit-text-stroke:0.45px #111;transform:scaleX(1.0987);">2030</div>
<div class="r" style="left:2860.00px;top:278.00px;width:31.00px;height:1392.30px;background:#0a0a0a;"></div>
<div class="r" style="left:2862.50px;top:281.00px;width:27.00px;height:1386.00px;background:#121212;border-radius:13px;"></div>
<svg style="left:2868.5px;top:286px;" width="15" height="11" viewBox="0 0 15 11"><path d="M7 1 L13.5 9.5 H0.5 Z" fill="#9a9a9a" stroke="#9a9a9a" stroke-width="1.2" stroke-linejoin="round"/></svg>
<div class="r" style="left:2870.40px;top:304.00px;width:11.80px;height:912.00px;background:#9a9a9a;border-radius:5.9px;"></div>
<svg style="left:2868.5px;top:1653.5px;" width="15" height="11" viewBox="0 0 15 11"><path d="M0.8 1 H13.6 L7.2 9.8 Z" fill="#9a9a9a" stroke="#9a9a9a" stroke-width="1.4" stroke-linejoin="round"/></svg>
<div class="r" style="left:11.20px;top:1670.30px;width:2880.00px;height:48.00px;background:#0a0a0a;"></div>
<svg style="left:44px;top:1684px;" width="13" height="17" viewBox="0 0 13 17"><path d="M10.5 1.5 L2.5 8.2 L10.5 15" fill="none" stroke="#9a9a9a" stroke-width="1.6"/></svg>
<svg style="left:92px;top:1684px;" width="13" height="17" viewBox="0 0 13 17"><path d="M2.5 1.5 L10.5 8.2 L2.5 15" fill="none" stroke="#d8d8d8" stroke-width="1.6"/></svg>
<div class="t" style="left:189.28px;top:1685.32px;font-size:20.286px;font-weight:normal;color:#ffffff;font-family:'Liberation Sans', sans-serif;transform:scaleX(1.0240);">Contents</div>
<div class="r" style="left:298.90px;top:1676.20px;width:127.80px;height:35.80px;background:#fff06e;border-radius:6px;"></div>
<div class="t" style="left:313.36px;top:1685.32px;font-size:20.286px;font-weight:normal;color:#1c1c1c;font-family:'Liberation Sans', sans-serif;">Dashboard</div>
<div class="r" style="left:439.80px;top:1676.20px;width:105.70px;height:35.80px;background:#fff06e;border-radius:6px;"></div>
<div class="t" style="left:451.72px;top:1685.32px;font-size:20.286px;font-weight:normal;color:#1c1c1c;font-family:'Liberation Sans', sans-serif;">Revenue</div>
<div class="r" style="left:559.00px;top:1676.20px;width:78.80px;height:35.80px;background:#fff06e;border-radius:6px;"></div>
<div class="t" style="left:568.32px;top:1685.32px;font-size:20.286px;font-weight:normal;color:#1c1c1c;font-family:'Liberation Sans', sans-serif;">COGS</div>
<div class="r" style="left:651.40px;top:1676.20px;width:75.10px;height:35.80px;background:#fff06e;border-radius:6px;"></div>
<div class="t" style="left:660.55px;top:1685.32px;font-size:20.286px;font-weight:normal;color:#1c1c1c;font-family:'Liberation Sans', sans-serif;">OPEX</div>
<div class="r" style="left:740.70px;top:1676.20px;width:87.30px;height:35.80px;background:#fff06e;border-radius:6px;"></div>
<div class="t" style="left:753.13px;top:1685.32px;font-size:20.286px;font-weight:normal;color:#1c1c1c;font-family:'Liberation Sans', sans-serif;">Payroll</div>
<div class="r" style="left:842.00px;top:1676.20px;width:86.60px;height:35.80px;background:#fff06e;border-radius:6px;"></div>
<div class="t" style="left:850.21px;top:1685.32px;font-size:20.286px;font-weight:normal;color:#1c1c1c;font-family:'Liberation Sans', sans-serif;">CAPEX</div>
<div class="r" style="left:942.00px;top:1676.20px;width:112.00px;height:35.80px;background:#fff06e;border-radius:6px;"></div>
<div class="t" style="left:954.82px;top:1685.32px;font-size:20.286px;font-weight:normal;color:#1c1c1c;font-family:'Liberation Sans', sans-serif;">CapTable</div>
<div class="r" style="left:1068.20px;top:1676.20px;width:89.30px;height:35.80px;background:#fff06e;border-radius:6px;"></div>
<div class="t" style="left:1081.06px;top:1685.32px;font-size:20.286px;font-weight:normal;color:#1c1c1c;font-family:'Liberation Sans', sans-serif;">Capital</div>
<div class="r" style="left:1171.30px;top:1676.20px;width:41.00px;height:35.80px;background:#4cb4e7;border-radius:6px;"></div>
<div class="t" style="left:1181.98px;top:1685.32px;font-size:20.286px;font-weight:normal;color:#1c1c1c;font-family:'Liberation Sans', sans-serif;">IS</div>
<div class="r" style="left:1226.00px;top:1676.20px;width:47.00px;height:35.80px;background:#4cb4e7;border-radius:6px;"></div>
<div class="t" style="left:1235.68px;top:1685.32px;font-size:20.286px;font-weight:normal;color:#1c1c1c;font-family:'Liberation Sans', sans-serif;">CF</div>
<div class="r" style="left:1287.00px;top:1676.20px;width:47.80px;height:35.80px;background:#4cb4e7;border-radius:6px;"></div>
<div class="t" style="left:1297.14px;top:1685.32px;font-size:20.286px;font-weight:normal;color:#1c1c1c;font-family:'Liberation Sans', sans-serif;">BS</div>
<div class="r" style="left:1348.20px;top:1676.20px;width:114.50px;height:35.80px;background:#4cb4e7;border-radius:6px;"></div>
<div class="t" style="left:1360.46px;top:1685.32px;font-size:20.286px;font-weight:normal;color:#1c1c1c;font-family:'Liberation Sans', sans-serif;">Scenarios</div>
<div class="r" style="left:1476.00px;top:1676.20px;width:114.50px;height:35.80px;background:#4cb4e7;border-radius:6px;"></div>
<div class="t" style="left:1492.38px;top:1685.32px;font-size:20.286px;font-weight:normal;color:#1c1c1c;font-family:'Liberation Sans', sans-serif;">Valuation</div>
<div class="r" style="left:1603.90px;top:1676.20px;width:113.60px;height:35.80px;background:#4cb4e7;border-radius:6px;"></div>
<div class="t" style="left:1616.91px;top:1685.32px;font-size:20.286px;font-weight:normal;color:#1c1c1c;font-family:'Liberation Sans', sans-serif;">Summary</div>
<div class="r" style="left:1731.30px;top:1676.20px;width:47.10px;height:35.80px;background:#4cb4e7;border-radius:6px;"></div>
<div class="t" style="left:1741.09px;top:1685.32px;font-size:20.286px;font-weight:normal;color:#1c1c1c;font-family:'Liberation Sans', sans-serif;">BE</div>
<div class="r" style="left:1792.20px;top:1676.20px;width:71.40px;height:35.80px;background:#4cb4e7;border-radius:6px;"></div>
<div class="t" style="left:1802.39px;top:1685.32px;font-size:20.286px;font-weight:normal;color:#1c1c1c;font-family:'Liberation Sans', sans-serif;">ROIC</div>
<div class="r" style="left:1877.40px;top:1676.20px;width:84.50px;height:35.80px;background:#4cb4e7;border-radius:6px;"></div>
<div class="t" style="left:1889.37px;top:1685.32px;font-size:20.286px;font-weight:normal;color:#1c1c1c;font-family:'Liberation Sans', sans-serif;">Charts</div>
<div class="r" style="left:292.00px;top:1681.00px;width:1.30px;height:33.00px;background:#3a3a3a;"></div>
<div class="r" style="left:432.80px;top:1681.00px;width:1.30px;height:33.00px;background:#3a3a3a;"></div>
<div class="r" style="left:551.60px;top:1681.00px;width:1.30px;height:33.00px;background:#3a3a3a;"></div>
<div class="r" style="left:643.90px;top:1681.00px;width:1.30px;height:33.00px;background:#3a3a3a;"></div>
<div class="r" style="left:732.60px;top:1681.00px;width:1.30px;height:33.00px;background:#3a3a3a;"></div>
<div class="r" style="left:834.10px;top:1681.00px;width:1.30px;height:33.00px;background:#3a3a3a;"></div>
<div class="r" style="left:934.70px;top:1681.00px;width:1.30px;height:33.00px;background:#3a3a3a;"></div>
<div class="r" style="left:1060.10px;top:1681.00px;width:1.30px;height:33.00px;background:#3a3a3a;"></div>
<div class="r" style="left:1163.60px;top:1681.00px;width:1.30px;height:33.00px;background:#3a3a3a;"></div>
<div class="r" style="left:1218.40px;top:1681.00px;width:1.30px;height:33.00px;background:#3a3a3a;"></div>
<div class="r" style="left:1279.10px;top:1681.00px;width:1.30px;height:33.00px;background:#3a3a3a;"></div>
<div class="r" style="left:1340.90px;top:1681.00px;width:1.30px;height:33.00px;background:#3a3a3a;"></div>
<div class="r" style="left:1468.80px;top:1681.00px;width:1.30px;height:33.00px;background:#3a3a3a;"></div>
<div class="r" style="left:1596.60px;top:1681.00px;width:1.30px;height:33.00px;background:#3a3a3a;"></div>
<div class="r" style="left:1723.60px;top:1681.00px;width:1.30px;height:33.00px;background:#3a3a3a;"></div>
<div class="r" style="left:1784.50px;top:1681.00px;width:1.30px;height:33.00px;background:#3a3a3a;"></div>
<div class="r" style="left:1869.70px;top:1681.00px;width:1.30px;height:33.00px;background:#3a3a3a;"></div>
<div class="r" style="left:1968.00px;top:1681.00px;width:1.30px;height:33.00px;background:#3a3a3a;"></div>
<div class="r" style="left:1975.2px;top:1670.3px;width:63.1px;height:41.2px;border-radius:0 0 7px 7px;background:linear-gradient(#ffffff 0%, #f4f8fb 55%, #dcecf6 100%)"></div>
<div class="t" style="left:1986.50px;top:1680.92px;font-size:20.286px;font-weight:normal;color:#1c1c1c;font-family:'Liberation Sans', sans-serif;transform:scaleX(0.9480);">KPIs</div>
<div class="r" style="left:1987.40px;top:1705.30px;width:39.50px;height:2.20px;background:#1e7145;border-radius:1px;"></div>
<div class="r" style="left:2044.60px;top:1681.00px;width:1.30px;height:33.00px;background:#3a3a3a;"></div>
<div class="r" style="left:2051.70px;top:1676.20px;width:30.00px;height:35.80px;background:#4cb4e7;border-radius:6px;"></div>
<div class="t" style="left:2055.50px;top:1685.32px;font-size:20.286px;font-weight:normal;color:#1c1c1c;font-family:'Liberation Sans', sans-serif;">S</div>
<div class="r" style="left:2072.20px;top:1672.00px;width:12.00px;height:44.00px;background:#0a0a0a;"></div>
<div class="r" style="left:2087.30px;top:1690.60px;width:3.60px;height:3.60px;background:#e8e8e8;border-radius:1.8px;"></div>
<div class="r" style="left:2093.50px;top:1690.60px;width:3.60px;height:3.60px;background:#e8e8e8;border-radius:1.8px;"></div>
<div class="r" style="left:2099.70px;top:1690.60px;width:3.60px;height:3.60px;background:#e8e8e8;border-radius:1.8px;"></div>
<div class="r" style="left:2135.00px;top:1691.50px;width:16.30px;height:1.60px;background:#e8e8e8;"></div>
<div class="r" style="left:2142.40px;top:1683.40px;width:1.60px;height:16.30px;background:#e8e8e8;"></div>
<div class="r" style="left:2189.80px;top:1686.50px;width:3.40px;height:3.40px;background:#e8e8e8;border-radius:1.7px;"></div>
<div class="r" style="left:2189.80px;top:1692.10px;width:3.40px;height:3.40px;background:#e8e8e8;border-radius:1.7px;"></div>
<div class="r" style="left:2189.80px;top:1697.70px;width:3.40px;height:3.40px;background:#e8e8e8;border-radius:1.7px;"></div>
<div class="r" style="left:2217.00px;top:1681.00px;width:642.80px;height:24.40px;background:#151515;border-radius:12px;"></div>
<svg style="left:2223px;top:1685px;" width="13" height="16" viewBox="0 0 13 16"><path d="M11 1.2 V14.3 L1.5 7.7 Z" fill="#9a9a9a" stroke="#9a9a9a" stroke-width="1.2" stroke-linejoin="round"/></svg>
<div class="r" style="left:2241.60px;top:1686.30px;width:411.40px;height:13.00px;background:#9a9a9a;border-radius:6.5px;"></div>
<svg style="left:2840px;top:1685px;" width="13" height="16" viewBox="0 0 13 16"><path d="M1.5 1.2 V14.3 L11 7.7 Z" fill="#9a9a9a" stroke="#9a9a9a" stroke-width="1.2" stroke-linejoin="round"/></svg>
<div class="r" style="left:11.20px;top:1718.20px;width:2880.00px;height:1.10px;background:#353535;"></div>
<div class="r" style="left:11.20px;top:1719.60px;width:2880.00px;height:31.20px;background:#141414;"></div>
<div class="t" style="left:26.13px;top:1726.39px;font-size:17.143px;font-weight:normal;color:#e0e0e0;font-family:'Liberation Sans', sans-serif;transform:scaleX(0.8705);">Ready</div>
<svg style="left:98px;top:1726px;" width="24" height="20" viewBox="0 0 24 20"><rect x="1.2" y="1.2" width="19.5" height="16.5" fill="none" stroke="#e0e0e0" stroke-width="1.6"/>
<path d="M1.2 5.5 H20.7 M4 9 H8 M4 12 H7 M4 15 H7" stroke="#e0e0e0" stroke-width="1.4"/>
<circle cx="15" cy="13" r="5.2" fill="#141414" stroke="#e0e0e0" stroke-width="1.6"/><circle cx="15" cy="13" r="2" fill="#e0e0e0"/></svg>
<svg style="left:145px;top:1725px;" width="24" height="22" viewBox="0 0 24 22"><circle cx="8" cy="3" r="2.4" fill="none" stroke="#e8e8e8" stroke-width="1.5"/>
<path d="M1 7 L8 8 L15 5 M8 8 L8 13 L3.5 20.5 M8 13 L11 16" fill="none" stroke="#e8e8e8" stroke-width="1.6"/>
<path d="M13 13.5 L21 21 M21 13.5 L13 21" stroke="#e8e8e8" stroke-width="1.6"/></svg>
<div class="t" style="left:173.30px;top:1726.39px;font-size:17.143px;font-weight:bold;color:#ffffff;font-family:'Liberation Sans', sans-serif;transform:scaleX(0.9186);">Accessibility: Investigate</div>
<div class="r" style="left:2445.00px;top:1719.60px;width:60.00px;height:31.20px;background:#262626;"></div>
<svg style="left:2463.5px;top:1724px;" width="22" height="21" viewBox="0 0 22 21"><rect x="1.2" y="1.2" width="18.6" height="18.6" fill="none" stroke="#ffffff" stroke-width="2"/><path d="M7.4 1 V20 M13.6 1 V20 M1 7.4 H20 M1 13.6 H20" stroke="#ffffff" stroke-width="2"/></svg>
<svg style="left:2524px;top:1724px;" width="24" height="21" viewBox="0 0 24 21"><rect x="1.2" y="1.2" width="20" height="18.6" fill="none" stroke="#ffffff" stroke-width="2"/><rect x="5" y="4.5" width="12.5" height="12" fill="none" stroke="#ffffff" stroke-width="1.8"/><path d="M8 8 H14.5 M8 10.5 H14.5 M8 13 H14.5" stroke="#ffffff" stroke-width="1.3"/></svg>
<svg style="left:2584px;top:1724px;" width="25" height="21" viewBox="0 0 25 21"><rect x="1.2" y="1.2" width="20" height="18.6" fill="none" stroke="#ffffff" stroke-width="2"/><path d="M1 11.5 H13 V1 M7 1 V11.5" fill="none" stroke="#ffffff" stroke-width="2"/></svg>
<div class="r" style="left:2632.00px;top:1733.90px;width:13.00px;height:1.50px;background:#e8e8e8;"></div>
<div class="r" style="left:2653.00px;top:1734.10px;width:147.80px;height:1.60px;background:#bdbdbd;"></div>
<div class="r" style="left:2727.20px;top:1730.50px;width:1.30px;height:9.00px;background:#bdbdbd;"></div>
<div class="r" style="left:2732.80px;top:1727.20px;width:8.20px;height:15.50px;background:#b8b8b8;border-radius:1px;"></div>
<div class="r" style="left:2808.00px;top:1733.90px;width:13.00px;height:1.50px;background:#e8e8e8;"></div>
<div class="r" style="left:2813.75px;top:1728.20px;width:1.50px;height:13.00px;background:#e8e8e8;"></div>
<div class="t" style="left:2839.08px;top:1726.09px;font-size:17.143px;font-weight:normal;color:#e8e8e8;font-family:'Liberation Sans', sans-serif;transform:scaleX(0.9161);">140%</div></div></body></html>
